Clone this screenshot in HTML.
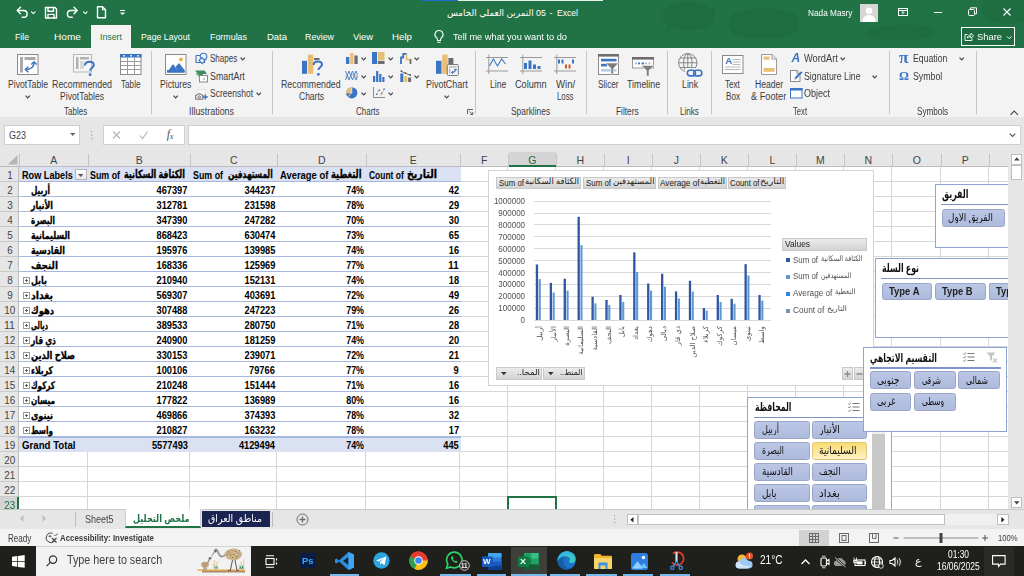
<!DOCTYPE html>
<html lang="en">
<head>
<meta charset="utf-8">
<title>05 التمرين العملي الخامس - Excel</title>
<style>
*{box-sizing:border-box;margin:0;padding:0}
html,body{width:1024px;height:576px;overflow:hidden;background:#fff}
body{position:relative;font-family:"Liberation Sans","DejaVu Sans",sans-serif;font-size:11px;color:#262626}
.abs{position:absolute}
.ar{font-family:"DejaVu Sans","Liberation Sans",sans-serif}
#title{left:0;top:0;width:1024px;height:48px;background:#217346;color:#fff;overflow:hidden}
#ribbon{left:0;top:48px;width:1024px;height:69px;background:#f3f3f3;color:#262626}
#fbar{left:0;top:117px;width:1024px;height:35px;background:#e6e6e6}
#colhdr{left:0;top:152px;width:1008px;height:15px;background:#e6e6e6;color:#444}
#grid{left:0;top:167px;width:1008px;height:342px;background:#fff;overflow:hidden}
#vscroll{left:1008px;top:152px;width:16px;height:357px;background:#e6e6e6}
#tabs{left:0;top:509px;width:1024px;height:20px;background:#e6e6e6}
#status{left:0;top:529px;width:1024px;height:17px;background:#f3f3f3;color:#333}
#task{left:0;top:546px;width:1024px;height:30px;background:#1f201c;color:#fff}
.t{position:absolute;white-space:nowrap;line-height:1}
.c{text-align:center}
svg{position:absolute;overflow:visible}
</style>
</head>
<body>
<!-- p_title -->
<div id="title" class="abs">
<svg width="1024" height="48" style="left:0;top:0"><g fill="#1d6a3f" opacity=".6"><path d="M668 6c10-5 34-5 44 2 6 5 4 15-4 19-9 4-26 4-34 1l-9 5 2-8c-6-5-6-14 1-19z"/><path d="M733 14c10-7 50-8 62 0 7 6 5 17-4 21-12 5-44 5-56 0-8-5-9-15-2-21z"/><path d="M868 30c8-6 50-8 64-2 5 3 3 8-3 10-14 3-48 3-58 0-5-2-6-5-3-8z"/><path d="M985 0h39v22c-12 3-30 2-38-4-6-5-6-13-1-18z"/><path d="M455 40c10-6 40-6 50 0v8h-50z" opacity=".5"/></g></svg>
<div class="abs" style="left:422px;top:0;width:36px;height:1px;background:#1e6fd0"></div>
<div class="abs" style="left:458px;top:0;width:145px;height:1px;background:#e8f0ea"></div>
<svg width="140" height="26" style="left:0;top:0" fill="none" stroke="#fff" stroke-width="1.4" stroke-linecap="round" stroke-linejoin="round"><path d="M17.5 10.5h6.2a3.4 3.4 0 0 1 0 6.8h-1.5"/><path d="M20.5 7.3l-3.2 3.2 3.2 3.2"/><path d="M31.5 11.8l1.8 1.8 1.8-1.8" stroke-width="1.1"/><path d="M45.5 7.5h9.5l1.5 1.5v9h-11z"/><path d="M48 7.8v3.4h5.5V7.8" /><path d="M48 18v-3.6h6V18" /><path d="M77 10.5h-6.2a3.4 3.4 0 0 0 0 6.8h1.5"/><path d="M74 7.3l3.2 3.2-3.2 3.2"/><path d="M83.5 11.8l1.8 1.8 1.8-1.8" stroke-width="1.1"/><path d="M97.5 6.8h5l3 3v8h-8z"/><path d="M102.5 6.8v3h3" stroke-width="1.1"/><path d="M120.5 10.5h4" stroke-width="1.1"/><path d="M120.7 13l1.8 1.8 1.8-1.8z" fill="#fff" stroke-width=".6"/></svg>
<span class="t" style="left:447.00px;top:7.60px;line-height:10.81px;font-family:'Liberation Sans','DejaVu Sans',sans-serif;font-size:9.4px;font-weight:400;transform:scaleX(0.9469);transform-origin:left center;"><span dir="rtl" style="unicode-bidi:isolate">05 التمرين العملي الخامس</span></span>
<span class="t" style="left:549.50px;top:7.60px;line-height:10.81px;font-family:'Liberation Sans','DejaVu Sans',sans-serif;font-size:9.4px;font-weight:400;">-</span>
<span class="t" style="left:557.00px;top:7.60px;line-height:10.81px;font-family:'Liberation Sans','DejaVu Sans',sans-serif;font-size:9.4px;font-weight:400;transform:scaleX(0.9155);transform-origin:left center;">Excel</span>
<span class="t" style="left:807.60px;top:7.60px;line-height:10.81px;font-family:'Liberation Sans','DejaVu Sans',sans-serif;font-size:9.4px;font-weight:400;transform:scaleX(0.8804);transform-origin:left center;">Nada Masry</span>
<div class="abs" style="left:860px;top:4px;width:18px;height:18px;background:#d6d6d6"></div>
<svg width="18" height="18" style="left:860px;top:4px" fill="#fff"><circle cx="9" cy="6.8" r="3.3"/><path d="M2.5 18c0-5 3-7 6.500-7s6.500 2 6.500 7z"/></svg>
<svg width="130" height="26" style="left:894px;top:0" fill="none" stroke="#fff" stroke-width="1"><rect x="4.500" y="8.500" width="9" height="7"/><path d="M4.500 10.500h9"/><path d="M9 14.200v-2.400M7.600 12.900l1.400-1.400 1.400 1.400" stroke-width=".9"/><path d="M40 12.500h8"/><rect x="74.500" y="9.500" width="6" height="6" rx="1"/><path d="M76.500 9.300v-1.500h6v6h-1.800" /><path d="M109.500 8.500l7 7M116.500 8.500l-7 7" stroke-width="1.2"/></svg>
<div class="abs" style="left:91px;top:25px;width:40px;height:23px;background:#f3f3f3"></div>
<span class="t" style="left:15.00px;top:31.80px;line-height:10.81px;font-family:'Liberation Sans','DejaVu Sans',sans-serif;font-size:9.4px;font-weight:400;transform:scaleX(0.9266);transform-origin:left center;">File</span>
<span class="t" style="left:54.00px;top:31.80px;line-height:10.81px;font-family:'Liberation Sans','DejaVu Sans',sans-serif;font-size:9.4px;font-weight:400;transform:scaleX(1.0793);transform-origin:left center;">Home</span>
<span class="t" style="left:141.00px;top:31.80px;line-height:10.81px;font-family:'Liberation Sans','DejaVu Sans',sans-serif;font-size:9.4px;font-weight:400;transform:scaleX(0.9306);transform-origin:left center;">Page Layout</span>
<span class="t" style="left:210.00px;top:31.80px;line-height:10.81px;font-family:'Liberation Sans','DejaVu Sans',sans-serif;font-size:9.4px;font-weight:400;transform:scaleX(0.9468);transform-origin:left center;">Formulas</span>
<span class="t" style="left:267.00px;top:31.80px;line-height:10.81px;font-family:'Liberation Sans','DejaVu Sans',sans-serif;font-size:9.4px;font-weight:400;transform:scaleX(1.0095);transform-origin:left center;">Data</span>
<span class="t" style="left:305.00px;top:31.80px;line-height:10.81px;font-family:'Liberation Sans','DejaVu Sans',sans-serif;font-size:9.4px;font-weight:400;transform:scaleX(0.9431);transform-origin:left center;">Review</span>
<span class="t" style="left:353.00px;top:31.80px;line-height:10.81px;font-family:'Liberation Sans','DejaVu Sans',sans-serif;font-size:9.4px;font-weight:400;transform:scaleX(0.9922);transform-origin:left center;">View</span>
<span class="t" style="left:392.00px;top:31.80px;line-height:10.81px;font-family:'Liberation Sans','DejaVu Sans',sans-serif;font-size:9.4px;font-weight:400;transform:scaleX(1.0373);transform-origin:left center;">Help</span>
<span class="t" style="left:100.00px;top:31.80px;line-height:10.81px;font-family:'Liberation Sans','DejaVu Sans',sans-serif;font-size:9.4px;font-weight:400;color:#217346;transform:scaleX(0.9380);transform-origin:left center;">Insert</span>
<svg width="14" height="18" style="left:432px;top:28px" fill="none" stroke="#fff" stroke-width="1.1" stroke-linecap="round"><path d="M7 2.500a4 4 0 0 0-2.300 7.300c.5.500.8 1.100.8 2v.7h3v-.7c0-.9.300-1.500.8-2A4 4 0 0 0 7 2.500z"/><path d="M5.800 14.300h2.400"/></svg>
<span class="t" style="left:453.00px;top:31.80px;line-height:10.81px;font-family:'Liberation Sans','DejaVu Sans',sans-serif;font-size:9.4px;font-weight:400;transform:scaleX(0.9854);transform-origin:left center;">Tell me what you want to do</span>
<div class="abs" style="left:961px;top:27px;width:54px;height:19px;border:1px solid #fff;background:#1e6b40"></div>
<svg width="11" height="11" style="left:964px;top:31px" fill="none" stroke="#fff" stroke-width=".9" stroke-linejoin="round"><path d="M3.500 3.500h-2.500v6h7v-2"/><path d="M3.300 7c.3-2 1.600-3 3.700-3.100V2.300l2.500 2.500L7 7.300V5.700c-1.500 0-2.700.3-3.700 1.300z"/></svg>
<span class="t" style="left:976.70px;top:30.98px;line-height:11.04px;font-family:'Liberation Sans','DejaVu Sans',sans-serif;font-size:9.6px;font-weight:400;transform:scaleX(0.9762);transform-origin:left center;">Share</span>
<svg width="8" height="6" style="left:1006px;top:34.500px" fill="none" stroke="#fff" stroke-width="1"><path d="M1 1.500l2.200 2.200 2.200-2.200"/></svg>
</div>
<!-- p_ribbon -->
<div id="ribbon" class="abs"></div>
<div class="abs" style="left:0;top:116.500px;width:1024px;height:1px;background:#e9e9e9"></div>
<svg width="22" height="21" style="left:17px;top:54px"><rect x=".5" y=".5" width="20.500" height="20" fill="#fdfdfd" stroke="#8a8a8a"/><rect x="3" y="3" width="3" height="15.500" fill="#a9a9a9"/><rect x="7.500" y="3" width="11" height="3" fill="#a9a9a9"/><path d="M9 15.500c4.500 0 8-2.500 8-6.500" fill="none" stroke="#3a74c4" stroke-width="1.500"/><path d="M14.300 10.500L17 7.800l2.700 2.700" fill="none" stroke="#3a74c4" stroke-width="1.500"/><path d="M11.300 12.800L8.500 15.500l2.800 2.700" fill="none" stroke="#3a74c4" stroke-width="1.500"/></svg>
<span class="t" style="left:7.80px;top:78.85px;line-height:11.50px;font-family:'Liberation Sans','DejaVu Sans',sans-serif;font-size:10px;font-weight:400;color:#3b3b3b;transform:scaleX(0.8669);transform-origin:left center;">PivotTable</span>
<svg width="6" height="4" style="left:24.6px;top:94.9px" fill="none" stroke="#444" stroke-width="1.200"><path d="M.5 .7l2.200 2.200 2.200-2.200"/></svg>
<svg width="24" height="24" style="left:73px;top:54px"><rect x=".5" y=".5" width="18" height="17.500" fill="#f6f6f6" stroke="#b5b5b5"/><rect x="3" y="3" width="2.500" height="12" fill="#b0b0b0"/><rect x="7" y="3" width="9" height="2.500" fill="#b0b0b0"/><rect x="7" y="7" width="4" height="8" fill="#d8d8d8"/><path d="M12 11.500c0-2.800 2-3.800 4.500-3.800s4.300 1.200 4.300 3.300c0 2.700-3.700 2.800-3.700 5.800" fill="none" stroke="#3a74c4" stroke-width="2"/><circle cx="17.100" cy="20.700" r="1.400" fill="#3a74c4"/></svg>
<span class="t" style="left:52.00px;top:78.85px;line-height:11.50px;font-family:'Liberation Sans','DejaVu Sans',sans-serif;font-size:10px;font-weight:400;color:#3b3b3b;transform:scaleX(0.8848);transform-origin:left center;">Recommended</span>
<span class="t" style="left:60.00px;top:90.95px;line-height:11.50px;font-family:'Liberation Sans','DejaVu Sans',sans-serif;font-size:10px;font-weight:400;color:#3b3b3b;transform:scaleX(0.8604);transform-origin:left center;">PivotTables</span>
<svg width="22" height="21" style="left:120px;top:54px"><rect x=".5" y=".5" width="20.500" height="20" fill="#fff" stroke="#8a8a8a"/><rect x="0" y="0" width="21.500" height="3.500" fill="#3a74c4"/><path d="M.5 7.500h20.500M.5 11.500h20.500M.5 15.500h20.500M7.500 3.500v17M14.500 3.500v17" stroke="#9a9a9a" fill="none"/><rect x="3" y="1.200" width="2" height="1.200" fill="#fff"/><rect x="10" y="1.200" width="2" height="1.200" fill="#fff"/><rect x="17" y="1.200" width="2" height="1.200" fill="#fff"/></svg>
<span class="t" style="left:120.60px;top:78.85px;line-height:11.50px;font-family:'Liberation Sans','DejaVu Sans',sans-serif;font-size:10px;font-weight:400;color:#3b3b3b;transform:scaleX(0.8157);transform-origin:left center;">Table</span>
<span class="t" style="left:63.80px;top:105.85px;line-height:11.50px;font-family:'Liberation Sans','DejaVu Sans',sans-serif;font-size:10px;font-weight:400;color:#3b3b3b;transform:scaleX(0.8026);transform-origin:left center;">Tables</span>
<div class="abs" style="left:151px;top:51px;width:1px;height:63px;background:#c6c6c6"></div>
<svg width="22" height="21" style="left:164.500px;top:54px"><rect x=".5" y=".5" width="20.500" height="20" fill="#fdfdfd" stroke="#8a8a8a"/><circle cx="16" cy="5.500" r="1.900" fill="#e8b04a"/><path d="M2 18.500l6-8.500 6 8.500z" fill="#3a74c4"/><path d="M10.500 13l3.500-4 5.500 7v2.500h-6z" fill="#3a74c4"/><rect x="2" y="16" width="17.500" height="2.500" fill="#3a74c4"/></svg>
<span class="t" style="left:159.70px;top:78.85px;line-height:11.50px;font-family:'Liberation Sans','DejaVu Sans',sans-serif;font-size:10px;font-weight:400;color:#3b3b3b;transform:scaleX(0.8664);transform-origin:left center;">Pictures</span>
<svg width="6" height="4" style="left:172.6px;top:94.9px" fill="none" stroke="#444" stroke-width="1.200"><path d="M.5 .7l2.200 2.200 2.200-2.200"/></svg>
<svg width="14" height="13" style="left:195px;top:52px" fill="none" stroke="#3a74c4" stroke-width="1.100"><path d="M1 3.500h5M9.500 8v2.500H1V3.500"/><circle cx="8.500" cy="4.500" r="3.300" fill="#f3f3f3"/><path d="M6.800 5.500l3.200 3.300-2.800 2.800L4 8.300z" fill="#f3f3f3"/></svg>
<span class="t" style="left:210.00px;top:53.15px;line-height:11.50px;font-family:'Liberation Sans','DejaVu Sans',sans-serif;font-size:10px;font-weight:400;color:#3b3b3b;transform:scaleX(0.8018);transform-origin:left center;">Shapes</span>
<svg width="6" height="4" style="left:240.3px;top:57.4px" fill="none" stroke="#444" stroke-width="1.200"><path d="M.5 .7l2.200 2.200 2.200-2.200"/></svg>
<svg width="14" height="13" style="left:195px;top:69.500px"><path d="M0 .5h9.500l2.500 3.500H8l-1.500 2.500H4.500L3 4z" fill="#3f8f5e"/><path d="M1 3l3.500 4" stroke="#3f8f5e" fill="none"/><rect x="4.500" y="5.500" width="8" height="6.500" fill="#fdfdfd" stroke="#8a8a8a"/><rect x="8" y="8" width="2" height="2" fill="#c9c9c9"/></svg>
<span class="t" style="left:210.00px;top:70.55px;line-height:11.50px;font-family:'Liberation Sans','DejaVu Sans',sans-serif;font-size:10px;font-weight:400;color:#3b3b3b;transform:scaleX(0.8821);transform-origin:left center;">SmartArt</span>
<svg width="14" height="11" style="left:195px;top:88.500px"><rect x="2.500" y=".5" width="8" height="6" fill="#fbfbfb" stroke="#e2e2e2"/><path d="M.7 6h1.600l.8-1.200h2.600l.8 1.200h1.300v4.200H.7z" fill="#f3f3f3" stroke="#5b5b5b" stroke-width=".9"/><circle cx="4.300" cy="8" r="1.200" fill="none" stroke="#5b5b5b" stroke-width=".8"/><path d="M10.300 5.500v5M7.800 8h5" stroke="#3a74c4" stroke-width="1.400"/></svg>
<span class="t" style="left:210.00px;top:87.75px;line-height:11.50px;font-family:'Liberation Sans','DejaVu Sans',sans-serif;font-size:10px;font-weight:400;color:#3b3b3b;transform:scaleX(0.8499);transform-origin:left center;">Screenshot</span>
<svg width="6" height="4" style="left:255.6px;top:92.0px" fill="none" stroke="#444" stroke-width="1.200"><path d="M.5 .7l2.200 2.200 2.200-2.200"/></svg>
<span class="t" style="left:189.00px;top:105.85px;line-height:11.50px;font-family:'Liberation Sans','DejaVu Sans',sans-serif;font-size:10px;font-weight:400;color:#3b3b3b;transform:scaleX(0.8897);transform-origin:left center;">Illustrations</span>
<div class="abs" style="left:272px;top:51px;width:1px;height:63px;background:#c6c6c6"></div>
<!-- p_ribbon2 -->
<svg width="24" height="24" style="left:301px;top:54px"><rect x="1" y="6.800" width="5" height="13" fill="#3a74c4"/><rect x="6.800" y=".6" width="5.500" height="19.200" fill="#e9bf76"/><rect x="13" y="4" width="5.500" height="2" fill="#6d6d6d"/><path d="M12.600 11c0-2.500 1.800-3.500 4.200-3.500s4.200 1.100 4.200 3.100c0 2.600-3.600 2.700-3.600 5.400" fill="none" stroke="#3a74c4" stroke-width="2"/><circle cx="17.300" cy="20.300" r="1.400" fill="#3a74c4"/><path d="M8 3h1.500M8 6h1.500M8 9h1.500M8 12h1.500" stroke="#d2a14d" stroke-width=".8"/></svg>
<span class="t" style="left:281.00px;top:78.85px;line-height:11.50px;font-family:'Liberation Sans','DejaVu Sans',sans-serif;font-size:10px;font-weight:400;color:#3b3b3b;transform:scaleX(0.8789);transform-origin:left center;">Recommended</span>
<span class="t" style="left:298.80px;top:90.95px;line-height:11.50px;font-family:'Liberation Sans','DejaVu Sans',sans-serif;font-size:10px;font-weight:400;color:#3b3b3b;transform:scaleX(0.8488);transform-origin:left center;">Charts</span>
<svg width="12" height="11" style="left:345.600px;top:52.700px"><rect x="0" y="4" width="3.300" height="7" fill="#3a74c4"/><rect x="4.200" y="0" width="3.300" height="11" fill="#e9bf76"/><rect x="8.400" y="2.500" width="3.300" height="8.500" fill="#6d6d6d"/></svg>
<svg width="6" height="4" style="left:360.6px;top:57.4px" fill="none" stroke="#444" stroke-width="1.200"><path d="M.5 .7l2.200 2.200 2.200-2.200"/></svg>
<svg width="13" height="11" style="left:345px;top:70px" fill="none" stroke-width=".85"><path d="M.5 10l3.500-9 3.500 9 3.500-9 1.500 4" stroke="#3a74c4"/><path d="M.5 1l3.500 9 3.500-9 3.500 9 1.500-4" stroke="#3a74c4"/><path d="M.5 6l4 1.500 3.500-3 4.500 2" stroke="#9a9a9a" stroke-width=".7"/></svg>
<svg width="6" height="4" style="left:360.6px;top:74.8px" fill="none" stroke="#444" stroke-width="1.200"><path d="M.5 .7l2.200 2.200 2.200-2.200"/></svg>
<svg width="12" height="12" style="left:345.600px;top:87px"><circle cx="5.800" cy="5.800" r="5.600" fill="#3a74c4"/><path d="M5.800 5.800V.2A5.600 5.600 0 0 0 .2 5.800z" fill="#e9bf76"/><path d="M5.800 5.800H.2a5.600 5.600 0 0 0 1.700 4z" fill="#6d6d6d"/><path d="M5.800 .2v5.600H.2M5.800 5.800L1.900 9.800" stroke="#f3f3f3" stroke-width=".8" fill="none"/></svg>
<svg width="6" height="4" style="left:360.6px;top:92.0px" fill="none" stroke="#444" stroke-width="1.200"><path d="M.5 .7l2.200 2.200 2.200-2.200"/></svg>
<svg width="13" height="12" style="left:372px;top:52.200px"><rect x="0" y="0" width="5" height="12" fill="#3a74c4"/><rect x="5.800" y="0" width="6.700" height="8" fill="#e9bf76"/><rect x="5.800" y="8.800" width="6.700" height="3.200" fill="#6d6d6d"/></svg>
<svg width="6" height="4" style="left:387.6px;top:57.4px" fill="none" stroke="#444" stroke-width="1.200"><path d="M.5 .7l2.200 2.200 2.200-2.200"/></svg>
<svg width="12" height="11" style="left:372.500px;top:70.500px" fill="#3a74c4"><rect x="0" y="5" width="2.200" height="6"/><rect x="3.100" y="0" width="2.200" height="11"/><rect x="6.200" y="3" width="2.200" height="8"/><rect x="9.300" y="6" width="2.200" height="5"/></svg>
<svg width="6" height="4" style="left:387.6px;top:74.8px" fill="none" stroke="#444" stroke-width="1.200"><path d="M.5 .7l2.200 2.200 2.200-2.200"/></svg>
<svg width="13" height="12" style="left:372.500px;top:87px"><path d="M.5 0v10.500h11.500" stroke="#8a8a8a" fill="none"/><g fill="#3a74c4"><rect x="3" y="6.500" width="1.500" height="1.500"/><rect x="5.500" y="2.500" width="1.500" height="1.500"/><rect x="8" y="5.500" width="1.500" height="1.500"/><rect x="10.300" y="1.500" width="1.500" height="1.500"/></g><g fill="#e9bf76"><rect x="4" y="3.800" width="1.500" height="1.500"/><rect x="7" y="7" width="1.500" height="1.500"/><rect x="9.500" y="3.500" width="1.500" height="1.500"/></g></svg>
<svg width="6" height="4" style="left:387.6px;top:92.0px" fill="none" stroke="#444" stroke-width="1.200"><path d="M.5 .7l2.200 2.200 2.200-2.200"/></svg>
<svg width="12" height="11" style="left:399.500px;top:52.700px" fill="none" stroke-width="1.800"><path d="M1 11V4.500h3" stroke="#3a74c4"/><path d="M3.200 4.500V1h3.500" stroke="#3a74c4"/><path d="M6.500 1v5.500h3" stroke="#e9bf76"/><path d="M10.500 6v5" stroke="#6d6d6d"/></svg>
<svg width="6" height="4" style="left:414.3px;top:57.4px" fill="none" stroke="#444" stroke-width="1.200"><path d="M.5 .7l2.200 2.200 2.200-2.200"/></svg>
<svg width="12" height="12" style="left:399.500px;top:69.500px"><rect x=".3" y="3.500" width="3" height="8.500" fill="#3a74c4"/><rect x="4.200" y="6" width="3" height="6" fill="#e9bf76"/><rect x="8.100" y="7.500" width="3" height="4.500" fill="#6d6d6d"/><path d="M1 1l4 2.200 5.500 2" stroke="#555" stroke-width=".9" fill="none"/><g fill="#555"><rect x=".5" y=".3" width="1.500" height="1.500"/><rect x="4.800" y="2.300" width="1.500" height="1.500"/><rect x="9.500" y="4.300" width="1.500" height="1.500"/></g></svg>
<svg width="6" height="4" style="left:414.3px;top:74.8px" fill="none" stroke="#444" stroke-width="1.200"><path d="M.5 .7l2.200 2.200 2.200-2.200"/></svg>
<svg width="24" height="24" style="left:435px;top:54px"><rect x="1" y="6.800" width="5.500" height="13" fill="#3a74c4"/><rect x="7.200" y=".6" width="5.500" height="19.200" fill="#e9bf76"/><rect x="13.400" y="4" width="5" height="6" fill="#6d6d6d"/><rect x="12.300" y="10.500" width="11" height="11" rx="1" fill="#f3f3f3" stroke="#7a7a7a"/><rect x="14" y="12.200" width="7.500" height="1.300" fill="#b5b5b5"/><rect x="14" y="14.500" width="1.300" height="5" fill="#b5b5b5"/><path d="M16.500 18.500c2.500 0 4-1.300 4-3.300" fill="none" stroke="#3a74c4" stroke-width="1.100"/><path d="M19 16.300l1.500-1.500 1.500 1.500" fill="none" stroke="#3a74c4" stroke-width="1"/><path d="M18 17l-1.500 1.500L18 20" fill="none" stroke="#3a74c4" stroke-width="1"/></svg>
<span class="t" style="left:426.00px;top:78.85px;line-height:11.50px;font-family:'Liberation Sans','DejaVu Sans',sans-serif;font-size:10px;font-weight:400;color:#3b3b3b;transform:scaleX(0.8932);transform-origin:left center;">PivotChart</span>
<svg width="6" height="4" style="left:443.6px;top:94.9px" fill="none" stroke="#444" stroke-width="1.200"><path d="M.5 .7l2.200 2.200 2.200-2.200"/></svg>
<span class="t" style="left:355.80px;top:105.85px;line-height:11.50px;font-family:'Liberation Sans','DejaVu Sans',sans-serif;font-size:10px;font-weight:400;color:#3b3b3b;transform:scaleX(0.8013);transform-origin:left center;">Charts</span>
<svg width="7" height="6" style="left:467px;top:108.500px" fill="none" stroke="#555" stroke-width=".9"><path d="M.5 5V.5H6"/><path d="M2.500 2.500l3.300 3M5.800 3v2.500H3.300"/></svg>
<div class="abs" style="left:475px;top:51px;width:1px;height:63px;background:#c6c6c6"></div>
<svg width="23" height="20" style="left:486.400px;top:54px"><path d="M0 3.500h22M0 17h22M2.8 .5v19.500" stroke="#9a9a9a" fill="none"/><path d="M3.500 12l3.800-7 4.200 7 4.200-7 3.800 5" stroke="#3a74c4" stroke-width="1.100" fill="none"/></svg>
<span class="t" style="left:489.80px;top:78.85px;line-height:11.50px;font-family:'Liberation Sans','DejaVu Sans',sans-serif;font-size:10px;font-weight:400;color:#3b3b3b;transform:scaleX(0.8569);transform-origin:left center;">Line</span>
<svg width="23" height="20" style="left:520.300px;top:54px"><path d="M0 3.500h22M0 17h22M2.8 .5v19.500" stroke="#9a9a9a" fill="none"/><g fill="#3a74c4"><rect x="4" y="9" width="3" height="6"/><rect x="8.500" y="6.500" width="3" height="8.500"/><rect x="13" y="10.500" width="3" height="4.500"/><rect x="17.500" y="12" width="3" height="3"/></g></svg>
<span class="t" style="left:515.30px;top:78.85px;line-height:11.50px;font-family:'Liberation Sans','DejaVu Sans',sans-serif;font-size:10px;font-weight:400;color:#3b3b3b;transform:scaleX(0.9168);transform-origin:left center;">Column</span>
<svg width="23" height="20" style="left:554px;top:54px"><path d="M0 3.500h22M0 17h22M2.8 .5v19.500" stroke="#9a9a9a" fill="none"/><g fill="#3a74c4"><rect x="4" y="5.500" width="2" height="4"/><rect x="7.500" y="5.500" width="2" height="4"/><rect x="18" y="5.500" width="2" height="4"/></g><g fill="#d0582a"><rect x="11" y="10.500" width="2" height="4"/><rect x="14.500" y="10.500" width="2" height="4"/></g></svg>
<span class="t" style="left:555.60px;top:78.85px;line-height:11.50px;font-family:'Liberation Sans','DejaVu Sans',sans-serif;font-size:10px;font-weight:400;color:#3b3b3b;transform:scaleX(0.9550);transform-origin:left center;">Win/</span>
<span class="t" style="left:556.70px;top:90.95px;line-height:11.50px;font-family:'Liberation Sans','DejaVu Sans',sans-serif;font-size:10px;font-weight:400;color:#3b3b3b;transform:scaleX(0.7811);transform-origin:left center;">Loss</span>
<span class="t" style="left:511.40px;top:105.85px;line-height:11.50px;font-family:'Liberation Sans','DejaVu Sans',sans-serif;font-size:10px;font-weight:400;color:#3b3b3b;transform:scaleX(0.8372);transform-origin:left center;">Sparklines</span>
<div class="abs" style="left:586px;top:51px;width:1px;height:63px;background:#c6c6c6"></div>
<!-- p_ribbon3 -->
<svg width="22" height="22" style="left:598px;top:54px"><rect x=".5" y=".5" width="20" height="20" fill="#fdfdfd" stroke="#8a8a8a"/><rect x="0" y="0" width="21" height="2.600" fill="#6d6d6d"/><rect x="3" y="4.800" width="15.500" height="2.600" fill="#3a74c4"/><rect x="3" y="9.800" width="6" height="2.600" fill="#3a74c4"/><rect x="3" y="15" width="15.500" height="2.600" fill="#b8cbe8"/><path d="M7.500 9h13l-5 5.500v5.500h-2.500v-5.500z" fill="#7d7d7d" stroke="#fdfdfd" stroke-width=".6"/></svg>
<span class="t" style="left:598.40px;top:78.85px;line-height:11.50px;font-family:'Liberation Sans','DejaVu Sans',sans-serif;font-size:10px;font-weight:400;color:#3b3b3b;transform:scaleX(0.8235);transform-origin:left center;">Slicer</span>
<svg width="23" height="20" style="left:632px;top:57px"><rect x=".5" y=".5" width="21" height="10.500" fill="#fdfdfd" stroke="#9a9a9a"/><rect x="0" y="0" width="22" height="2.600" fill="#6d6d6d"/><rect x="3" y="5.500" width="2" height="1.800" fill="#b5b5b5"/><rect x="6" y="5.500" width="2" height="1.800" fill="#3a74c4"/><rect x="9.500" y="5.500" width="2.500" height="1.800" fill="#3a74c4"/><rect x="13" y="5.500" width="2" height="1.800" fill="#b5b5b5"/><rect x="16.500" y="5.500" width="2" height="1.800" fill="#b5b5b5"/><path d="M9.500 8.500h12.500l-5 5v5.500h-2.500v-5.500z" fill="#7d7d7d" stroke="#f3f3f3" stroke-width=".6"/></svg>
<span class="t" style="left:626.90px;top:78.85px;line-height:11.50px;font-family:'Liberation Sans','DejaVu Sans',sans-serif;font-size:10px;font-weight:400;color:#3b3b3b;transform:scaleX(0.8845);transform-origin:left center;">Timeline</span>
<span class="t" style="left:615.60px;top:105.85px;line-height:11.50px;font-family:'Liberation Sans','DejaVu Sans',sans-serif;font-size:10px;font-weight:400;color:#3b3b3b;transform:scaleX(0.8335);transform-origin:left center;">Filters</span>
<div class="abs" style="left:667px;top:51px;width:1px;height:63px;background:#c6c6c6"></div>
<svg width="26" height="24" style="left:678px;top:53px" fill="none"><g stroke="#7a7a7a" stroke-width=".9"><circle cx="9.800" cy="9.800" r="9.200"/><ellipse cx="9.800" cy="9.800" rx="4.200" ry="9.200"/><path d="M9.800 .6v18.400M.6 9.800h18.400M2 5h15.600M2 14.600h15.600"/></g><rect x="7" y="15" width="19" height="10" fill="#f3f3f3" stroke="none"/><g stroke="#3a74c4" stroke-width="1.600"><rect x="9.300" y="17.300" width="8.200" height="5.600" rx="2.800"/><rect x="15.700" y="17.300" width="8.200" height="5.600" rx="2.800"/></g></svg>
<span class="t" style="left:681.90px;top:78.85px;line-height:11.50px;font-family:'Liberation Sans','DejaVu Sans',sans-serif;font-size:10px;font-weight:400;color:#3b3b3b;transform:scaleX(0.8769);transform-origin:left center;">Link</span>
<span class="t" style="left:679.50px;top:105.85px;line-height:11.50px;font-family:'Liberation Sans','DejaVu Sans',sans-serif;font-size:10px;font-weight:400;color:#3b3b3b;transform:scaleX(0.8048);transform-origin:left center;">Links</span>
<div class="abs" style="left:711px;top:51px;width:1px;height:63px;background:#c6c6c6"></div>
<svg width="22" height="20" style="left:722px;top:54.500px"><rect x=".5" y=".5" width="20.500" height="18" fill="#fdfdfd" stroke="#8a8a8a"/><path d="M10.500 4.500h8M10.500 7h8M10.500 9.500h8M3 12h15.500M3 14.500h15.500" stroke="#b0b0b0" stroke-width=".9"/></svg>
<span class="t" style="left:725.30px;top:56.34px;line-height:10.92px;font-family:'Liberation Sans','DejaVu Sans',sans-serif;font-size:9.5px;font-weight:700;color:#3a74c4;">A</span>
<span class="t" style="left:725.20px;top:78.85px;line-height:11.50px;font-family:'Liberation Sans','DejaVu Sans',sans-serif;font-size:10px;font-weight:400;color:#3b3b3b;transform:scaleX(0.8068);transform-origin:left center;">Text</span>
<span class="t" style="left:725.60px;top:90.95px;line-height:11.50px;font-family:'Liberation Sans','DejaVu Sans',sans-serif;font-size:10px;font-weight:400;color:#3b3b3b;transform:scaleX(0.8181);transform-origin:left center;">Box</span>
<svg width="17" height="21" style="left:761px;top:54px"><path d="M.5 .5h10.500l4.500 4.500v15.500H.5z" fill="#fdfdfd" stroke="#9a9a9a"/><path d="M11 .5v4.500h4.500" fill="none" stroke="#9a9a9a"/><rect x="2.500" y="2.500" width="6" height="3.200" fill="#e9bf76"/><rect x="2.500" y="14" width="11" height="3.800" fill="#e9bf76"/></svg>
<span class="t" style="left:754.50px;top:78.85px;line-height:11.50px;font-family:'Liberation Sans','DejaVu Sans',sans-serif;font-size:10px;font-weight:400;color:#3b3b3b;transform:scaleX(0.8594);transform-origin:left center;">Header</span>
<span class="t" style="left:750.60px;top:90.95px;line-height:11.50px;font-family:'Liberation Sans','DejaVu Sans',sans-serif;font-size:10px;font-weight:400;color:#3b3b3b;transform:scaleX(0.9176);transform-origin:left center;">&amp; Footer</span>
<span class="t" style="left:791.50px;top:52.10px;line-height:13.80px;font-family:'Liberation Sans','DejaVu Sans',sans-serif;font-size:12px;font-weight:700;color:#3a74c4;font-style:italic;">A</span>
<span class="t" style="left:804.20px;top:53.15px;line-height:11.50px;font-family:'Liberation Sans','DejaVu Sans',sans-serif;font-size:10px;font-weight:400;color:#3b3b3b;transform:scaleX(0.9288);transform-origin:left center;">WordArt</span>
<svg width="6" height="4" style="left:840.3px;top:57.4px" fill="none" stroke="#444" stroke-width="1.200"><path d="M.5 .7l2.200 2.200 2.200-2.200"/></svg>
<svg width="13" height="12" style="left:790px;top:70px"><path d="M.5 .5h6.500l3 3v8H.5z" fill="#fdfdfd" stroke="#7a7a7a" stroke-width=".9"/><path d="M7 .5v3h3" fill="none" stroke="#7a7a7a" stroke-width=".9"/><path d="M4 10l1-3 6-6 1.700 1.700-6 6z" fill="#3a74c4" stroke="#f3f3f3" stroke-width=".5"/></svg>
<span class="t" style="left:804.20px;top:70.55px;line-height:11.50px;font-family:'Liberation Sans','DejaVu Sans',sans-serif;font-size:10px;font-weight:400;color:#3b3b3b;transform:scaleX(0.8775);transform-origin:left center;">Signature Line</span>
<svg width="6" height="4" style="left:871.8px;top:74.8px" fill="none" stroke="#444" stroke-width="1.200"><path d="M.5 .7l2.200 2.200 2.200-2.200"/></svg>
<svg width="13" height="11" style="left:790px;top:87.800px"><rect x=".5" y=".5" width="11.500" height="9.500" fill="#fdfdfd" stroke="#3a74c4"/><rect x="0" y="0" width="12.500" height="2.500" fill="#3a74c4"/></svg>
<span class="t" style="left:804.20px;top:87.75px;line-height:11.50px;font-family:'Liberation Sans','DejaVu Sans',sans-serif;font-size:10px;font-weight:400;color:#3b3b3b;transform:scaleX(0.9029);transform-origin:left center;">Object</span>
<span class="t" style="left:792.80px;top:105.85px;line-height:11.50px;font-family:'Liberation Sans','DejaVu Sans',sans-serif;font-size:10px;font-weight:400;color:#3b3b3b;transform:scaleX(0.7687);transform-origin:left center;">Text</span>
<div class="abs" style="left:889px;top:51px;width:1px;height:63px;background:#c6c6c6"></div>
<span class="t" style="left:899.00px;top:48.80px;line-height:18.40px;font-family:'Liberation Serif','DejaVu Serif',serif;font-size:16px;font-weight:700;color:#3a74c4;transform:scaleX(1.0838);transform-origin:left center;">π</span>
<span class="t" style="left:912.80px;top:53.15px;line-height:11.50px;font-family:'Liberation Sans','DejaVu Sans',sans-serif;font-size:10px;font-weight:400;color:#3b3b3b;transform:scaleX(0.8687);transform-origin:left center;">Equation</span>
<svg width="6" height="4" style="left:958.6px;top:57.4px" fill="none" stroke="#444" stroke-width="1.200"><path d="M.5 .7l2.200 2.200 2.200-2.200"/></svg>
<span class="t" style="left:899.00px;top:68.61px;line-height:14.37px;font-family:'Liberation Serif','DejaVu Serif',serif;font-size:12.5px;font-weight:700;color:#3a74c4;transform:scaleX(0.9984);transform-origin:left center;">Ω</span>
<span class="t" style="left:912.80px;top:70.55px;line-height:11.50px;font-family:'Liberation Sans','DejaVu Sans',sans-serif;font-size:10px;font-weight:400;color:#3b3b3b;transform:scaleX(0.8783);transform-origin:left center;">Symbol</span>
<span class="t" style="left:916.80px;top:105.85px;line-height:11.50px;font-family:'Liberation Sans','DejaVu Sans',sans-serif;font-size:10px;font-weight:400;color:#3b3b3b;transform:scaleX(0.8134);transform-origin:left center;">Symbols</span>
<div class="abs" style="left:976px;top:51px;width:1px;height:63px;background:#c6c6c6"></div>
<svg width="9" height="6" style="left:1010px;top:109.500px" fill="none" stroke="#444" stroke-width="1.100"><path d="M.5 4.800l3.700-3.700 3.700 3.700"/></svg>
<!-- p_fbar -->
<div id="fbar" class="abs"></div>
<div class="abs" style="left:3.500px;top:125px;width:76.500px;height:19.500px;background:#fff;border:1px solid #cfcfcf;"></div>
<span class="t" style="left:9.00px;top:129.46px;line-height:12.07px;font-family:'Liberation Sans','DejaVu Sans',sans-serif;font-size:10.5px;font-weight:400;color:#444;transform:scaleX(0.8560);transform-origin:left center;">G23</span>
<svg width="6" height="4" style="left:69.500px;top:133px"><path d="M0 0h5.500L2.750 3z" fill="#666"/></svg>
<svg width="2" height="9" style="left:90.500px;top:131px" fill="#a0a0a0"><rect x="0" y="0" width="1.200" height="1.200"/><rect x="0" y="3.500" width="1.200" height="1.200"/><rect x="0" y="7" width="1.200" height="1.200"/></svg>
<div class="abs" style="left:103px;top:125px;width:82px;height:19.500px;background:#fff;border:1px solid #cfcfcf;"></div>
<svg width="70" height="12" style="left:110px;top:129px" fill="none" stroke="#b4b4b4" stroke-width="1.100"><path d="M3 2.500l7 7M10 2.500l-7 7"/><path d="M30 6.500l2.500 3 5-7"/></svg>
<span class="t" style="left:166.80px;top:128.10px;line-height:13.80px;font-family:'Liberation Serif','DejaVu Serif',serif;font-size:12px;font-weight:400;color:#555;font-style:italic;"><i>f</i><span style="font-size:8.500px;position:relative;top:1.200px;left:-.3px">x</span></span>
<div class="abs" style="left:187.500px;top:125px;width:833px;height:19.500px;background:#fff;border:1px solid #cfcfcf;"></div>
<svg width="8" height="5" style="left:1008.500px;top:133px" fill="none" stroke="#555" stroke-width="1.200"><path d="M.7 .7l2.800 2.800L6.300 .7"/></svg>
<!-- p_grid -->
<div id="colhdr" class="abs"></div>
<div class="abs" style="left:0;top:166px;width:1008px;height:1px;background:#bdbdbd"></div>
<svg width="10" height="10" style="left:8px;top:154.500px"><path d="M9.500 0v9.500H0z" fill="#b5b5b5"/></svg>
<div class="abs" style="left:19px;top:154px;width:1px;height:12px;background:#c4c4c4"></div>
<span class="t" style="left:50.29px;top:154.26px;line-height:12.07px;font-family:'Liberation Sans','DejaVu Sans',sans-serif;font-size:10.5px;font-weight:400;color:#444;">A</span>
<div class="abs" style="left:88px;top:154px;width:1px;height:12px;background:#c4c4c4"></div>
<span class="t" style="left:135.79px;top:154.26px;line-height:12.07px;font-family:'Liberation Sans','DejaVu Sans',sans-serif;font-size:10.5px;font-weight:400;color:#444;">B</span>
<div class="abs" style="left:190px;top:154px;width:1px;height:12px;background:#c4c4c4"></div>
<span class="t" style="left:230.00px;top:154.26px;line-height:12.07px;font-family:'Liberation Sans','DejaVu Sans',sans-serif;font-size:10.5px;font-weight:400;color:#444;">C</span>
<div class="abs" style="left:277px;top:154px;width:1px;height:12px;background:#c4c4c4"></div>
<span class="t" style="left:318.00px;top:154.26px;line-height:12.07px;font-family:'Liberation Sans','DejaVu Sans',sans-serif;font-size:10.5px;font-weight:400;color:#444;">D</span>
<div class="abs" style="left:366px;top:154px;width:1px;height:12px;background:#c4c4c4"></div>
<span class="t" style="left:409.79px;top:154.26px;line-height:12.07px;font-family:'Liberation Sans','DejaVu Sans',sans-serif;font-size:10.5px;font-weight:400;color:#444;">E</span>
<div class="abs" style="left:460px;top:154px;width:1px;height:12px;background:#c4c4c4"></div>
<span class="t" style="left:481.09px;top:154.26px;line-height:12.07px;font-family:'Liberation Sans','DejaVu Sans',sans-serif;font-size:10.5px;font-weight:400;color:#444;">F</span>
<div class="abs" style="left:508px;top:154px;width:1px;height:12px;background:#c4c4c4"></div>
<div class="abs" style="left:509px;top:152px;width:47px;height:15px;background:#d4d4d4;border-bottom:2px solid #217346"></div>
<span class="t" style="left:528.21px;top:154.26px;line-height:12.07px;font-family:'Liberation Sans','DejaVu Sans',sans-serif;font-size:10.5px;font-weight:400;color:#217346;">G</span>
<div class="abs" style="left:556px;top:154px;width:1px;height:12px;background:#c4c4c4"></div>
<span class="t" style="left:576.50px;top:154.26px;line-height:12.07px;font-family:'Liberation Sans','DejaVu Sans',sans-serif;font-size:10.5px;font-weight:400;color:#444;">H</span>
<div class="abs" style="left:604px;top:154px;width:1px;height:12px;background:#c4c4c4"></div>
<span class="t" style="left:626.84px;top:154.26px;line-height:12.07px;font-family:'Liberation Sans','DejaVu Sans',sans-serif;font-size:10.5px;font-weight:400;color:#444;">I</span>
<div class="abs" style="left:652px;top:154px;width:1px;height:12px;background:#c4c4c4"></div>
<span class="t" style="left:673.67px;top:154.26px;line-height:12.07px;font-family:'Liberation Sans','DejaVu Sans',sans-serif;font-size:10.5px;font-weight:400;color:#444;">J</span>
<div class="abs" style="left:700px;top:154px;width:1px;height:12px;background:#c4c4c4"></div>
<span class="t" style="left:720.79px;top:154.26px;line-height:12.07px;font-family:'Liberation Sans','DejaVu Sans',sans-serif;font-size:10.5px;font-weight:400;color:#444;">K</span>
<div class="abs" style="left:748px;top:154px;width:1px;height:12px;background:#c4c4c4"></div>
<span class="t" style="left:769.38px;top:154.26px;line-height:12.07px;font-family:'Liberation Sans','DejaVu Sans',sans-serif;font-size:10.5px;font-weight:400;color:#444;">L</span>
<div class="abs" style="left:796px;top:154px;width:1px;height:12px;background:#c4c4c4"></div>
<span class="t" style="left:815.92px;top:154.26px;line-height:12.07px;font-family:'Liberation Sans','DejaVu Sans',sans-serif;font-size:10.5px;font-weight:400;color:#444;">M</span>
<div class="abs" style="left:844px;top:154px;width:1px;height:12px;background:#c4c4c4"></div>
<span class="t" style="left:864.50px;top:154.26px;line-height:12.07px;font-family:'Liberation Sans','DejaVu Sans',sans-serif;font-size:10.5px;font-weight:400;color:#444;">N</span>
<div class="abs" style="left:892px;top:154px;width:1px;height:12px;background:#c4c4c4"></div>
<span class="t" style="left:912.71px;top:154.26px;line-height:12.07px;font-family:'Liberation Sans','DejaVu Sans',sans-serif;font-size:10.5px;font-weight:400;color:#444;">O</span>
<div class="abs" style="left:941px;top:154px;width:1px;height:12px;background:#c4c4c4"></div>
<span class="t" style="left:961.79px;top:154.26px;line-height:12.07px;font-family:'Liberation Sans','DejaVu Sans',sans-serif;font-size:10.5px;font-weight:400;color:#444;">P</span>
<div class="abs" style="left:989px;top:154px;width:1px;height:12px;background:#c4c4c4"></div>
<div id="grid" class="abs">
<svg width="1008" height="342" style="left:0;top:0" shape-rendering="crispEdges" stroke="#d6d6d6" stroke-width="1"><path d="M19 14.5H1008"/><path d="M19 29.5H1008"/><path d="M19 44.5H1008"/><path d="M19 59.5H1008"/><path d="M19 74.5H1008"/><path d="M19 89.5H1008"/><path d="M19 104.5H1008"/><path d="M19 119.5H1008"/><path d="M19 134.5H1008"/><path d="M19 149.5H1008"/><path d="M19 164.5H1008"/><path d="M19 179.5H1008"/><path d="M19 194.5H1008"/><path d="M19 209.5H1008"/><path d="M19 224.5H1008"/><path d="M19 239.5H1008"/><path d="M19 254.5H1008"/><path d="M19 269.5H1008"/><path d="M19 284.5H1008"/><path d="M19 299.5H1008"/><path d="M19 314.5H1008"/><path d="M19 329.5H1008"/><path d="M19 344.5H1008"/><path d="M87.5 0V342"/><path d="M189.5 0V342"/><path d="M276.5 0V342"/><path d="M365.5 0V342"/><path d="M459.5 0V342"/><path d="M507.5 0V342"/><path d="M555.5 0V342"/><path d="M603.5 0V342"/><path d="M651.5 0V342"/><path d="M699.5 0V342"/><path d="M747.5 0V342"/><path d="M795.5 0V342"/><path d="M843.5 0V342"/><path d="M891.5 0V342"/><path d="M940.5 0V342"/><path d="M988.5 0V342"/></svg>
<div class="abs" style="left:0;top:0;width:19px;height:342px;background:#e6e6e6;border-right:1px solid #bdbdbd"></div>
<div class="abs" style="left:0;top:14px;width:18px;height:1px;background:#c9c9c9"></div>
<div class="abs" style="left:0;top:29px;width:18px;height:1px;background:#c9c9c9"></div>
<div class="abs" style="left:0;top:44px;width:18px;height:1px;background:#c9c9c9"></div>
<div class="abs" style="left:0;top:59px;width:18px;height:1px;background:#c9c9c9"></div>
<div class="abs" style="left:0;top:74px;width:18px;height:1px;background:#c9c9c9"></div>
<div class="abs" style="left:0;top:89px;width:18px;height:1px;background:#c9c9c9"></div>
<div class="abs" style="left:0;top:104px;width:18px;height:1px;background:#c9c9c9"></div>
<div class="abs" style="left:0;top:119px;width:18px;height:1px;background:#c9c9c9"></div>
<div class="abs" style="left:0;top:134px;width:18px;height:1px;background:#c9c9c9"></div>
<div class="abs" style="left:0;top:149px;width:18px;height:1px;background:#c9c9c9"></div>
<div class="abs" style="left:0;top:164px;width:18px;height:1px;background:#c9c9c9"></div>
<div class="abs" style="left:0;top:179px;width:18px;height:1px;background:#c9c9c9"></div>
<div class="abs" style="left:0;top:194px;width:18px;height:1px;background:#c9c9c9"></div>
<div class="abs" style="left:0;top:209px;width:18px;height:1px;background:#c9c9c9"></div>
<div class="abs" style="left:0;top:224px;width:18px;height:1px;background:#c9c9c9"></div>
<div class="abs" style="left:0;top:239px;width:18px;height:1px;background:#c9c9c9"></div>
<div class="abs" style="left:0;top:254px;width:18px;height:1px;background:#c9c9c9"></div>
<div class="abs" style="left:0;top:269px;width:18px;height:1px;background:#c9c9c9"></div>
<div class="abs" style="left:0;top:284px;width:18px;height:1px;background:#c9c9c9"></div>
<div class="abs" style="left:0;top:299px;width:18px;height:1px;background:#c9c9c9"></div>
<div class="abs" style="left:0;top:314px;width:18px;height:1px;background:#c9c9c9"></div>
<div class="abs" style="left:0;top:329px;width:18px;height:1px;background:#c9c9c9"></div>
<div class="abs" style="left:0;top:330px;width:19px;height:15px;background:#d4d4d4;border-right:2px solid #217346"></div>
<div class="abs" style="left:0;top:344px;width:18px;height:1px;background:#c9c9c9"></div>
<div class="abs" style="left:19px;top:0;width:442px;height:285px;background:#fff"></div>
<div class="abs" style="left:19px;top:0;width:442px;height:14.500px;background:#d9e1f2"></div>
<div class="abs" style="left:19px;top:270px;width:442px;height:15px;background:#d9e1f2;border-top:1px solid #a6b8df"></div>
<div class="abs" style="left:19px;top:14.0px;width:442px;height:1px;background:#a6b8df"></div>
<div class="abs" style="left:19px;top:29.0px;width:442px;height:1px;background:#a6b8df"></div>
<div class="abs" style="left:19px;top:44.0px;width:442px;height:1px;background:#a6b8df"></div>
<div class="abs" style="left:19px;top:59.0px;width:442px;height:1px;background:#a6b8df"></div>
<div class="abs" style="left:19px;top:74.0px;width:442px;height:1px;background:#a6b8df"></div>
<div class="abs" style="left:19px;top:89.0px;width:442px;height:1px;background:#a6b8df"></div>
<div class="abs" style="left:19px;top:104.0px;width:442px;height:1px;background:#a6b8df"></div>
<div class="abs" style="left:19px;top:119.0px;width:442px;height:1px;background:#a6b8df"></div>
<div class="abs" style="left:19px;top:134.0px;width:442px;height:1px;background:#a6b8df"></div>
<div class="abs" style="left:19px;top:149.0px;width:442px;height:1px;background:#a6b8df"></div>
<div class="abs" style="left:19px;top:164.0px;width:442px;height:1px;background:#a6b8df"></div>
<div class="abs" style="left:19px;top:179.0px;width:442px;height:1px;background:#a6b8df"></div>
<div class="abs" style="left:19px;top:194.0px;width:442px;height:1px;background:#a6b8df"></div>
<div class="abs" style="left:19px;top:209.0px;width:442px;height:1px;background:#a6b8df"></div>
<div class="abs" style="left:19px;top:224.0px;width:442px;height:1px;background:#a6b8df"></div>
<div class="abs" style="left:19px;top:239.0px;width:442px;height:1px;background:#a6b8df"></div>
<div class="abs" style="left:19px;top:254.0px;width:442px;height:1px;background:#a6b8df"></div>
<div class="abs" style="left:19px;top:269.0px;width:442px;height:1px;background:#a6b8df"></div>
<div class="abs" style="left:75px;top:2px;width:11.500px;height:11px;background:linear-gradient(#fff,#e9e9e9);border:1px solid #b5b5b5"></div>
<svg width="6" height="4" style="left:78.200px;top:6.500px"><path d="M0 0h5.400L2.700 3z" fill="#555"/></svg>
</div>
<span class="t" style="left:21.50px;top:169.65px;line-height:11.50px;font-family:'Liberation Sans','DejaVu Sans',sans-serif;font-size:10px;font-weight:700;color:#000;transform:scaleX(0.9140);transform-origin:left center;">Row Labels</span>
<span class="t" style="left:90.40px;top:169.65px;line-height:11.50px;font-family:'Liberation Sans','DejaVu Sans',sans-serif;font-size:10px;font-weight:700;color:#000;transform:scaleX(0.8852);transform-origin:left center;">Sum of</span>
<span class="t" style="left:124.30px;top:169.31px;line-height:10.58px;font-family:'Liberation Sans','DejaVu Sans',sans-serif;font-size:9.2px;font-weight:700;color:#000;transform:scale(0.8616,1.220);transform-origin:left center;-webkit-text-stroke:.25px #000;">الكثافة السكانية</span>
<span class="t" style="left:192.70px;top:169.65px;line-height:11.50px;font-family:'Liberation Sans','DejaVu Sans',sans-serif;font-size:10px;font-weight:700;color:#000;transform:scaleX(0.8852);transform-origin:left center;">Sum of</span>
<span class="t" style="left:227.60px;top:169.31px;line-height:10.58px;font-family:'Liberation Sans','DejaVu Sans',sans-serif;font-size:9.2px;font-weight:700;color:#000;transform:scale(0.8088,1.220);transform-origin:left center;-webkit-text-stroke:.25px #000;">المستهدفين</span>
<span class="t" style="left:279.60px;top:169.65px;line-height:11.50px;font-family:'Liberation Sans','DejaVu Sans',sans-serif;font-size:10px;font-weight:700;color:#000;transform:scaleX(0.9410);transform-origin:left center;">Average of</span>
<span class="t" style="left:330.90px;top:169.31px;line-height:10.58px;font-family:'Liberation Sans','DejaVu Sans',sans-serif;font-size:9.2px;font-weight:700;color:#000;transform:scale(0.9020,1.220);transform-origin:left center;-webkit-text-stroke:.25px #000;">التغطية</span>
<span class="t" style="left:368.50px;top:169.65px;line-height:11.50px;font-family:'Liberation Sans','DejaVu Sans',sans-serif;font-size:10px;font-weight:700;color:#000;transform:scaleX(0.8444);transform-origin:left center;">Count of</span>
<span class="t" style="left:407.00px;top:169.31px;line-height:10.58px;font-family:'Liberation Sans','DejaVu Sans',sans-serif;font-size:9.2px;font-weight:700;color:#000;transform:scale(1.0284,1.220);transform-origin:left center;-webkit-text-stroke:.25px #000;">التاريخ</span>
<span class="t" style="left:31.00px;top:185.20px;line-height:10.00px;font-family:'Liberation Sans','DejaVu Sans',sans-serif;font-size:8.7px;font-weight:700;color:#000;transform:scale(0.8427,1.220);transform-origin:left center;-webkit-text-stroke:.25px #000;">أربيل</span>
<span class="t" style="left:154.43px;top:184.95px;line-height:11.50px;font-family:'Liberation Sans','DejaVu Sans',sans-serif;font-size:10px;font-weight:700;color:#000;transform:scaleX(0.9258);transform-origin:right center;">467397</span>
<span class="t" style="left:241.82px;top:184.95px;line-height:11.50px;font-family:'Liberation Sans','DejaVu Sans',sans-serif;font-size:10px;font-weight:700;color:#000;transform:scaleX(0.9258);transform-origin:right center;">344237</span>
<span class="t" style="left:344.18px;top:184.95px;line-height:11.50px;font-family:'Liberation Sans','DejaVu Sans',sans-serif;font-size:10px;font-weight:700;color:#000;transform:scaleX(0.8918);transform-origin:right center;">74%</span>
<span class="t" style="left:447.68px;top:184.95px;line-height:11.50px;font-family:'Liberation Sans','DejaVu Sans',sans-serif;font-size:10px;font-weight:700;color:#000;transform:scaleX(0.9258);transform-origin:right center;">42</span>
<span class="t" style="left:31.00px;top:200.20px;line-height:10.00px;font-family:'Liberation Sans','DejaVu Sans',sans-serif;font-size:8.7px;font-weight:700;color:#000;transform:scale(0.8968,1.220);transform-origin:left center;-webkit-text-stroke:.25px #000;">الأنبار</span>
<span class="t" style="left:154.43px;top:199.95px;line-height:11.50px;font-family:'Liberation Sans','DejaVu Sans',sans-serif;font-size:10px;font-weight:700;color:#000;transform:scaleX(0.9258);transform-origin:right center;">312781</span>
<span class="t" style="left:241.82px;top:199.95px;line-height:11.50px;font-family:'Liberation Sans','DejaVu Sans',sans-serif;font-size:10px;font-weight:700;color:#000;transform:scaleX(0.9258);transform-origin:right center;">231598</span>
<span class="t" style="left:344.18px;top:199.95px;line-height:11.50px;font-family:'Liberation Sans','DejaVu Sans',sans-serif;font-size:10px;font-weight:700;color:#000;transform:scaleX(0.8918);transform-origin:right center;">78%</span>
<span class="t" style="left:447.68px;top:199.95px;line-height:11.50px;font-family:'Liberation Sans','DejaVu Sans',sans-serif;font-size:10px;font-weight:700;color:#000;transform:scaleX(0.9258);transform-origin:right center;">29</span>
<span class="t" style="left:31.00px;top:215.20px;line-height:10.00px;font-family:'Liberation Sans','DejaVu Sans',sans-serif;font-size:8.7px;font-weight:700;color:#000;transform:scale(0.8307,1.220);transform-origin:left center;-webkit-text-stroke:.25px #000;">البصرة</span>
<span class="t" style="left:154.43px;top:214.95px;line-height:11.50px;font-family:'Liberation Sans','DejaVu Sans',sans-serif;font-size:10px;font-weight:700;color:#000;transform:scaleX(0.9258);transform-origin:right center;">347390</span>
<span class="t" style="left:241.82px;top:214.95px;line-height:11.50px;font-family:'Liberation Sans','DejaVu Sans',sans-serif;font-size:10px;font-weight:700;color:#000;transform:scaleX(0.9258);transform-origin:right center;">247282</span>
<span class="t" style="left:344.18px;top:214.95px;line-height:11.50px;font-family:'Liberation Sans','DejaVu Sans',sans-serif;font-size:10px;font-weight:700;color:#000;transform:scaleX(0.8918);transform-origin:right center;">70%</span>
<span class="t" style="left:447.68px;top:214.95px;line-height:11.50px;font-family:'Liberation Sans','DejaVu Sans',sans-serif;font-size:10px;font-weight:700;color:#000;transform:scaleX(0.9258);transform-origin:right center;">30</span>
<span class="t" style="left:31.00px;top:230.20px;line-height:10.00px;font-family:'Liberation Sans','DejaVu Sans',sans-serif;font-size:8.7px;font-weight:700;color:#000;transform:scale(0.8998,1.220);transform-origin:left center;-webkit-text-stroke:.25px #000;">السليمانية</span>
<span class="t" style="left:154.43px;top:229.95px;line-height:11.50px;font-family:'Liberation Sans','DejaVu Sans',sans-serif;font-size:10px;font-weight:700;color:#000;transform:scaleX(0.9258);transform-origin:right center;">868423</span>
<span class="t" style="left:241.82px;top:229.95px;line-height:11.50px;font-family:'Liberation Sans','DejaVu Sans',sans-serif;font-size:10px;font-weight:700;color:#000;transform:scaleX(0.9258);transform-origin:right center;">630474</span>
<span class="t" style="left:344.18px;top:229.95px;line-height:11.50px;font-family:'Liberation Sans','DejaVu Sans',sans-serif;font-size:10px;font-weight:700;color:#000;transform:scaleX(0.8918);transform-origin:right center;">73%</span>
<span class="t" style="left:447.68px;top:229.95px;line-height:11.50px;font-family:'Liberation Sans','DejaVu Sans',sans-serif;font-size:10px;font-weight:700;color:#000;transform:scaleX(0.9258);transform-origin:right center;">65</span>
<span class="t" style="left:31.00px;top:245.20px;line-height:10.00px;font-family:'Liberation Sans','DejaVu Sans',sans-serif;font-size:8.7px;font-weight:700;color:#000;transform:scale(0.9048,1.220);transform-origin:left center;-webkit-text-stroke:.25px #000;">القادسية</span>
<span class="t" style="left:154.43px;top:244.95px;line-height:11.50px;font-family:'Liberation Sans','DejaVu Sans',sans-serif;font-size:10px;font-weight:700;color:#000;transform:scaleX(0.9258);transform-origin:right center;">195976</span>
<span class="t" style="left:241.82px;top:244.95px;line-height:11.50px;font-family:'Liberation Sans','DejaVu Sans',sans-serif;font-size:10px;font-weight:700;color:#000;transform:scaleX(0.9258);transform-origin:right center;">139985</span>
<span class="t" style="left:344.18px;top:244.95px;line-height:11.50px;font-family:'Liberation Sans','DejaVu Sans',sans-serif;font-size:10px;font-weight:700;color:#000;transform:scaleX(0.8918);transform-origin:right center;">74%</span>
<span class="t" style="left:447.68px;top:244.95px;line-height:11.50px;font-family:'Liberation Sans','DejaVu Sans',sans-serif;font-size:10px;font-weight:700;color:#000;transform:scaleX(0.9258);transform-origin:right center;">16</span>
<span class="t" style="left:31.00px;top:260.20px;line-height:10.00px;font-family:'Liberation Sans','DejaVu Sans',sans-serif;font-size:8.7px;font-weight:700;color:#000;transform:scale(1.0225,1.220);transform-origin:left center;-webkit-text-stroke:.25px #000;">النجف</span>
<span class="t" style="left:154.43px;top:259.95px;line-height:11.50px;font-family:'Liberation Sans','DejaVu Sans',sans-serif;font-size:10px;font-weight:700;color:#000;transform:scaleX(0.9258);transform-origin:right center;">168336</span>
<span class="t" style="left:241.82px;top:259.95px;line-height:11.50px;font-family:'Liberation Sans','DejaVu Sans',sans-serif;font-size:10px;font-weight:700;color:#000;transform:scaleX(0.9258);transform-origin:right center;">125969</span>
<span class="t" style="left:344.18px;top:259.95px;line-height:11.50px;font-family:'Liberation Sans','DejaVu Sans',sans-serif;font-size:10px;font-weight:700;color:#000;transform:scaleX(0.8918);transform-origin:right center;">77%</span>
<span class="t" style="left:448.22px;top:259.95px;line-height:11.50px;font-family:'Liberation Sans','DejaVu Sans',sans-serif;font-size:10px;font-weight:700;color:#000;transform:scaleX(0.9737);transform-origin:right center;">11</span>
<span class="t" style="left:31.00px;top:275.20px;line-height:10.00px;font-family:'Liberation Sans','DejaVu Sans',sans-serif;font-size:8.7px;font-weight:700;color:#000;transform:scale(0.9118,1.220);transform-origin:left center;-webkit-text-stroke:.25px #000;">بابل</span>
<span class="t" style="left:154.43px;top:274.95px;line-height:11.50px;font-family:'Liberation Sans','DejaVu Sans',sans-serif;font-size:10px;font-weight:700;color:#000;transform:scaleX(0.9258);transform-origin:right center;">210940</span>
<span class="t" style="left:241.82px;top:274.95px;line-height:11.50px;font-family:'Liberation Sans','DejaVu Sans',sans-serif;font-size:10px;font-weight:700;color:#000;transform:scaleX(0.9258);transform-origin:right center;">152131</span>
<span class="t" style="left:344.18px;top:274.95px;line-height:11.50px;font-family:'Liberation Sans','DejaVu Sans',sans-serif;font-size:10px;font-weight:700;color:#000;transform:scaleX(0.8918);transform-origin:right center;">74%</span>
<span class="t" style="left:447.68px;top:274.95px;line-height:11.50px;font-family:'Liberation Sans','DejaVu Sans',sans-serif;font-size:10px;font-weight:700;color:#000;transform:scaleX(0.9258);transform-origin:right center;">18</span>
<svg width="7" height="7" style="left:23px;top:276.7px"><rect x=".5" y=".5" width="6" height="6" fill="#fff" stroke="#9a9a9a"/><path d="M2 3.500h3M3.500 2v3" stroke="#555" stroke-width=".9"/></svg>
<span class="t" style="left:31.00px;top:290.20px;line-height:10.00px;font-family:'Liberation Sans','DejaVu Sans',sans-serif;font-size:8.7px;font-weight:700;color:#000;transform:scale(1.0667,1.220);transform-origin:left center;-webkit-text-stroke:.25px #000;">بغداد</span>
<span class="t" style="left:154.43px;top:289.95px;line-height:11.50px;font-family:'Liberation Sans','DejaVu Sans',sans-serif;font-size:10px;font-weight:700;color:#000;transform:scaleX(0.9258);transform-origin:right center;">569307</span>
<span class="t" style="left:241.82px;top:289.95px;line-height:11.50px;font-family:'Liberation Sans','DejaVu Sans',sans-serif;font-size:10px;font-weight:700;color:#000;transform:scaleX(0.9258);transform-origin:right center;">403691</span>
<span class="t" style="left:344.18px;top:289.95px;line-height:11.50px;font-family:'Liberation Sans','DejaVu Sans',sans-serif;font-size:10px;font-weight:700;color:#000;transform:scaleX(0.8918);transform-origin:right center;">72%</span>
<span class="t" style="left:447.68px;top:289.95px;line-height:11.50px;font-family:'Liberation Sans','DejaVu Sans',sans-serif;font-size:10px;font-weight:700;color:#000;transform:scaleX(0.9258);transform-origin:right center;">49</span>
<svg width="7" height="7" style="left:23px;top:291.7px"><rect x=".5" y=".5" width="6" height="6" fill="#fff" stroke="#9a9a9a"/><path d="M2 3.500h3M3.500 2v3" stroke="#555" stroke-width=".9"/></svg>
<span class="t" style="left:31.00px;top:305.20px;line-height:10.00px;font-family:'Liberation Sans','DejaVu Sans',sans-serif;font-size:8.7px;font-weight:700;color:#000;transform:scale(0.9627,1.220);transform-origin:left center;-webkit-text-stroke:.25px #000;">دهوك</span>
<span class="t" style="left:154.43px;top:304.95px;line-height:11.50px;font-family:'Liberation Sans','DejaVu Sans',sans-serif;font-size:10px;font-weight:700;color:#000;transform:scaleX(0.9258);transform-origin:right center;">307488</span>
<span class="t" style="left:241.82px;top:304.95px;line-height:11.50px;font-family:'Liberation Sans','DejaVu Sans',sans-serif;font-size:10px;font-weight:700;color:#000;transform:scaleX(0.9258);transform-origin:right center;">247223</span>
<span class="t" style="left:344.18px;top:304.95px;line-height:11.50px;font-family:'Liberation Sans','DejaVu Sans',sans-serif;font-size:10px;font-weight:700;color:#000;transform:scaleX(0.8918);transform-origin:right center;">79%</span>
<span class="t" style="left:447.68px;top:304.95px;line-height:11.50px;font-family:'Liberation Sans','DejaVu Sans',sans-serif;font-size:10px;font-weight:700;color:#000;transform:scaleX(0.9258);transform-origin:right center;">26</span>
<svg width="7" height="7" style="left:23px;top:306.7px"><rect x=".5" y=".5" width="6" height="6" fill="#fff" stroke="#9a9a9a"/><path d="M2 3.500h3M3.500 2v3" stroke="#555" stroke-width=".9"/></svg>
<span class="t" style="left:31.00px;top:320.20px;line-height:10.00px;font-family:'Liberation Sans','DejaVu Sans',sans-serif;font-size:8.7px;font-weight:700;color:#000;transform:scale(0.7376,1.220);transform-origin:left center;-webkit-text-stroke:.25px #000;">ديالى</span>
<span class="t" style="left:154.43px;top:319.95px;line-height:11.50px;font-family:'Liberation Sans','DejaVu Sans',sans-serif;font-size:10px;font-weight:700;color:#000;transform:scaleX(0.9258);transform-origin:right center;">389533</span>
<span class="t" style="left:241.82px;top:319.95px;line-height:11.50px;font-family:'Liberation Sans','DejaVu Sans',sans-serif;font-size:10px;font-weight:700;color:#000;transform:scaleX(0.9258);transform-origin:right center;">280750</span>
<span class="t" style="left:344.18px;top:319.95px;line-height:11.50px;font-family:'Liberation Sans','DejaVu Sans',sans-serif;font-size:10px;font-weight:700;color:#000;transform:scaleX(0.8918);transform-origin:right center;">71%</span>
<span class="t" style="left:447.68px;top:319.95px;line-height:11.50px;font-family:'Liberation Sans','DejaVu Sans',sans-serif;font-size:10px;font-weight:700;color:#000;transform:scaleX(0.9258);transform-origin:right center;">28</span>
<svg width="7" height="7" style="left:23px;top:321.7px"><rect x=".5" y=".5" width="6" height="6" fill="#fff" stroke="#9a9a9a"/><path d="M2 3.500h3M3.500 2v3" stroke="#555" stroke-width=".9"/></svg>
<span class="t" style="left:31.00px;top:335.20px;line-height:10.00px;font-family:'Liberation Sans','DejaVu Sans',sans-serif;font-size:8.7px;font-weight:700;color:#000;transform:scale(0.8681,1.220);transform-origin:left center;-webkit-text-stroke:.25px #000;">ذي قار</span>
<span class="t" style="left:154.43px;top:334.95px;line-height:11.50px;font-family:'Liberation Sans','DejaVu Sans',sans-serif;font-size:10px;font-weight:700;color:#000;transform:scaleX(0.9258);transform-origin:right center;">240900</span>
<span class="t" style="left:241.82px;top:334.95px;line-height:11.50px;font-family:'Liberation Sans','DejaVu Sans',sans-serif;font-size:10px;font-weight:700;color:#000;transform:scaleX(0.9258);transform-origin:right center;">181259</span>
<span class="t" style="left:344.18px;top:334.95px;line-height:11.50px;font-family:'Liberation Sans','DejaVu Sans',sans-serif;font-size:10px;font-weight:700;color:#000;transform:scaleX(0.8918);transform-origin:right center;">74%</span>
<span class="t" style="left:447.68px;top:334.95px;line-height:11.50px;font-family:'Liberation Sans','DejaVu Sans',sans-serif;font-size:10px;font-weight:700;color:#000;transform:scaleX(0.9258);transform-origin:right center;">20</span>
<svg width="7" height="7" style="left:23px;top:336.7px"><rect x=".5" y=".5" width="6" height="6" fill="#fff" stroke="#9a9a9a"/><path d="M2 3.500h3M3.500 2v3" stroke="#555" stroke-width=".9"/></svg>
<span class="t" style="left:31.00px;top:350.20px;line-height:10.00px;font-family:'Liberation Sans','DejaVu Sans',sans-serif;font-size:8.7px;font-weight:700;color:#000;transform:scale(0.9562,1.220);transform-origin:left center;-webkit-text-stroke:.25px #000;">صلاح الدين</span>
<span class="t" style="left:154.43px;top:349.95px;line-height:11.50px;font-family:'Liberation Sans','DejaVu Sans',sans-serif;font-size:10px;font-weight:700;color:#000;transform:scaleX(0.9258);transform-origin:right center;">330153</span>
<span class="t" style="left:241.82px;top:349.95px;line-height:11.50px;font-family:'Liberation Sans','DejaVu Sans',sans-serif;font-size:10px;font-weight:700;color:#000;transform:scaleX(0.9258);transform-origin:right center;">239071</span>
<span class="t" style="left:344.18px;top:349.95px;line-height:11.50px;font-family:'Liberation Sans','DejaVu Sans',sans-serif;font-size:10px;font-weight:700;color:#000;transform:scaleX(0.8918);transform-origin:right center;">72%</span>
<span class="t" style="left:447.68px;top:349.95px;line-height:11.50px;font-family:'Liberation Sans','DejaVu Sans',sans-serif;font-size:10px;font-weight:700;color:#000;transform:scaleX(0.9258);transform-origin:right center;">21</span>
<svg width="7" height="7" style="left:23px;top:351.7px"><rect x=".5" y=".5" width="6" height="6" fill="#fff" stroke="#9a9a9a"/><path d="M2 3.500h3M3.500 2v3" stroke="#555" stroke-width=".9"/></svg>
<span class="t" style="left:31.00px;top:365.20px;line-height:10.00px;font-family:'Liberation Sans','DejaVu Sans',sans-serif;font-size:8.7px;font-weight:700;color:#000;transform:scale(0.8883,1.220);transform-origin:left center;-webkit-text-stroke:.25px #000;">كربلاء</span>
<span class="t" style="left:154.43px;top:364.95px;line-height:11.50px;font-family:'Liberation Sans','DejaVu Sans',sans-serif;font-size:10px;font-weight:700;color:#000;transform:scaleX(0.9258);transform-origin:right center;">100106</span>
<span class="t" style="left:247.39px;top:364.95px;line-height:11.50px;font-family:'Liberation Sans','DejaVu Sans',sans-serif;font-size:10px;font-weight:700;color:#000;transform:scaleX(0.9258);transform-origin:right center;">79766</span>
<span class="t" style="left:344.18px;top:364.95px;line-height:11.50px;font-family:'Liberation Sans','DejaVu Sans',sans-serif;font-size:10px;font-weight:700;color:#000;transform:scaleX(0.8918);transform-origin:right center;">77%</span>
<span class="t" style="left:453.24px;top:364.95px;line-height:11.50px;font-family:'Liberation Sans','DejaVu Sans',sans-serif;font-size:10px;font-weight:700;color:#000;transform:scaleX(0.9258);transform-origin:right center;">9</span>
<svg width="7" height="7" style="left:23px;top:366.7px"><rect x=".5" y=".5" width="6" height="6" fill="#fff" stroke="#9a9a9a"/><path d="M2 3.500h3M3.500 2v3" stroke="#555" stroke-width=".9"/></svg>
<span class="t" style="left:31.00px;top:380.20px;line-height:10.00px;font-family:'Liberation Sans','DejaVu Sans',sans-serif;font-size:8.7px;font-weight:700;color:#000;transform:scale(0.8298,1.220);transform-origin:left center;-webkit-text-stroke:.25px #000;">كركوك</span>
<span class="t" style="left:154.43px;top:379.95px;line-height:11.50px;font-family:'Liberation Sans','DejaVu Sans',sans-serif;font-size:10px;font-weight:700;color:#000;transform:scaleX(0.9258);transform-origin:right center;">210248</span>
<span class="t" style="left:241.82px;top:379.95px;line-height:11.50px;font-family:'Liberation Sans','DejaVu Sans',sans-serif;font-size:10px;font-weight:700;color:#000;transform:scaleX(0.9258);transform-origin:right center;">151444</span>
<span class="t" style="left:344.18px;top:379.95px;line-height:11.50px;font-family:'Liberation Sans','DejaVu Sans',sans-serif;font-size:10px;font-weight:700;color:#000;transform:scaleX(0.8918);transform-origin:right center;">71%</span>
<span class="t" style="left:447.68px;top:379.95px;line-height:11.50px;font-family:'Liberation Sans','DejaVu Sans',sans-serif;font-size:10px;font-weight:700;color:#000;transform:scaleX(0.9258);transform-origin:right center;">16</span>
<svg width="7" height="7" style="left:23px;top:381.7px"><rect x=".5" y=".5" width="6" height="6" fill="#fff" stroke="#9a9a9a"/><path d="M2 3.500h3M3.500 2v3" stroke="#555" stroke-width=".9"/></svg>
<span class="t" style="left:31.00px;top:395.20px;line-height:10.00px;font-family:'Liberation Sans','DejaVu Sans',sans-serif;font-size:8.7px;font-weight:700;color:#000;transform:scale(0.8435,1.220);transform-origin:left center;-webkit-text-stroke:.25px #000;">ميسان</span>
<span class="t" style="left:154.43px;top:394.95px;line-height:11.50px;font-family:'Liberation Sans','DejaVu Sans',sans-serif;font-size:10px;font-weight:700;color:#000;transform:scaleX(0.9258);transform-origin:right center;">177822</span>
<span class="t" style="left:241.82px;top:394.95px;line-height:11.50px;font-family:'Liberation Sans','DejaVu Sans',sans-serif;font-size:10px;font-weight:700;color:#000;transform:scaleX(0.9258);transform-origin:right center;">136989</span>
<span class="t" style="left:344.18px;top:394.95px;line-height:11.50px;font-family:'Liberation Sans','DejaVu Sans',sans-serif;font-size:10px;font-weight:700;color:#000;transform:scaleX(0.8918);transform-origin:right center;">80%</span>
<span class="t" style="left:447.68px;top:394.95px;line-height:11.50px;font-family:'Liberation Sans','DejaVu Sans',sans-serif;font-size:10px;font-weight:700;color:#000;transform:scaleX(0.9258);transform-origin:right center;">16</span>
<svg width="7" height="7" style="left:23px;top:396.7px"><rect x=".5" y=".5" width="6" height="6" fill="#fff" stroke="#9a9a9a"/><path d="M2 3.500h3M3.500 2v3" stroke="#555" stroke-width=".9"/></svg>
<span class="t" style="left:31.00px;top:410.20px;line-height:10.00px;font-family:'Liberation Sans','DejaVu Sans',sans-serif;font-size:8.7px;font-weight:700;color:#000;transform:scale(0.9257,1.220);transform-origin:left center;-webkit-text-stroke:.25px #000;">نينوى</span>
<span class="t" style="left:154.43px;top:409.95px;line-height:11.50px;font-family:'Liberation Sans','DejaVu Sans',sans-serif;font-size:10px;font-weight:700;color:#000;transform:scaleX(0.9258);transform-origin:right center;">469866</span>
<span class="t" style="left:241.82px;top:409.95px;line-height:11.50px;font-family:'Liberation Sans','DejaVu Sans',sans-serif;font-size:10px;font-weight:700;color:#000;transform:scaleX(0.9258);transform-origin:right center;">374393</span>
<span class="t" style="left:344.18px;top:409.95px;line-height:11.50px;font-family:'Liberation Sans','DejaVu Sans',sans-serif;font-size:10px;font-weight:700;color:#000;transform:scaleX(0.8918);transform-origin:right center;">78%</span>
<span class="t" style="left:447.68px;top:409.95px;line-height:11.50px;font-family:'Liberation Sans','DejaVu Sans',sans-serif;font-size:10px;font-weight:700;color:#000;transform:scaleX(0.9258);transform-origin:right center;">32</span>
<svg width="7" height="7" style="left:23px;top:411.7px"><rect x=".5" y=".5" width="6" height="6" fill="#fff" stroke="#9a9a9a"/><path d="M2 3.500h3M3.500 2v3" stroke="#555" stroke-width=".9"/></svg>
<span class="t" style="left:31.00px;top:425.20px;line-height:10.00px;font-family:'Liberation Sans','DejaVu Sans',sans-serif;font-size:8.7px;font-weight:700;color:#000;transform:scale(0.8386,1.220);transform-origin:left center;-webkit-text-stroke:.25px #000;">واسط</span>
<span class="t" style="left:154.43px;top:424.95px;line-height:11.50px;font-family:'Liberation Sans','DejaVu Sans',sans-serif;font-size:10px;font-weight:700;color:#000;transform:scaleX(0.9258);transform-origin:right center;">210827</span>
<span class="t" style="left:241.82px;top:424.95px;line-height:11.50px;font-family:'Liberation Sans','DejaVu Sans',sans-serif;font-size:10px;font-weight:700;color:#000;transform:scaleX(0.9258);transform-origin:right center;">163232</span>
<span class="t" style="left:344.18px;top:424.95px;line-height:11.50px;font-family:'Liberation Sans','DejaVu Sans',sans-serif;font-size:10px;font-weight:700;color:#000;transform:scaleX(0.8918);transform-origin:right center;">78%</span>
<span class="t" style="left:447.68px;top:424.95px;line-height:11.50px;font-family:'Liberation Sans','DejaVu Sans',sans-serif;font-size:10px;font-weight:700;color:#000;transform:scaleX(0.9258);transform-origin:right center;">17</span>
<svg width="7" height="7" style="left:23px;top:426.7px"><rect x=".5" y=".5" width="6" height="6" fill="#fff" stroke="#9a9a9a"/><path d="M2 3.500h3M3.500 2v3" stroke="#555" stroke-width=".9"/></svg>
<span class="t" style="left:21.50px;top:439.95px;line-height:11.50px;font-family:'Liberation Sans','DejaVu Sans',sans-serif;font-size:10px;font-weight:700;color:#000;transform:scaleX(0.9661);transform-origin:left center;">Grand Total</span>
<span class="t" style="left:148.86px;top:439.95px;line-height:11.50px;font-family:'Liberation Sans','DejaVu Sans',sans-serif;font-size:10px;font-weight:700;color:#000;transform:scaleX(0.9258);transform-origin:right center;">5577493</span>
<span class="t" style="left:236.26px;top:439.95px;line-height:11.50px;font-family:'Liberation Sans','DejaVu Sans',sans-serif;font-size:10px;font-weight:700;color:#000;transform:scaleX(0.9258);transform-origin:right center;">4129494</span>
<span class="t" style="left:344.18px;top:439.95px;line-height:11.50px;font-family:'Liberation Sans','DejaVu Sans',sans-serif;font-size:10px;font-weight:700;color:#000;transform:scaleX(0.8918);transform-origin:right center;">74%</span>
<span class="t" style="left:442.11px;top:439.95px;line-height:11.50px;font-family:'Liberation Sans','DejaVu Sans',sans-serif;font-size:10px;font-weight:700;color:#000;transform:scaleX(0.9258);transform-origin:right center;">445</span>
<span class="t" style="left:6.78px;top:168.76px;line-height:12.07px;font-family:'Liberation Sans','DejaVu Sans',sans-serif;font-size:10.5px;font-weight:400;color:#444;transform:scaleX(0.9412);transform-origin:center center;">1</span>
<span class="t" style="left:6.78px;top:183.76px;line-height:12.07px;font-family:'Liberation Sans','DejaVu Sans',sans-serif;font-size:10.5px;font-weight:400;color:#444;transform:scaleX(0.9412);transform-origin:center center;">2</span>
<span class="t" style="left:6.78px;top:198.76px;line-height:12.07px;font-family:'Liberation Sans','DejaVu Sans',sans-serif;font-size:10.5px;font-weight:400;color:#444;transform:scaleX(0.9412);transform-origin:center center;">3</span>
<span class="t" style="left:6.78px;top:213.76px;line-height:12.07px;font-family:'Liberation Sans','DejaVu Sans',sans-serif;font-size:10.5px;font-weight:400;color:#444;transform:scaleX(0.9412);transform-origin:center center;">4</span>
<span class="t" style="left:6.78px;top:228.76px;line-height:12.07px;font-family:'Liberation Sans','DejaVu Sans',sans-serif;font-size:10.5px;font-weight:400;color:#444;transform:scaleX(0.9412);transform-origin:center center;">5</span>
<span class="t" style="left:6.78px;top:243.76px;line-height:12.07px;font-family:'Liberation Sans','DejaVu Sans',sans-serif;font-size:10.5px;font-weight:400;color:#444;transform:scaleX(0.9412);transform-origin:center center;">6</span>
<span class="t" style="left:6.78px;top:258.76px;line-height:12.07px;font-family:'Liberation Sans','DejaVu Sans',sans-serif;font-size:10.5px;font-weight:400;color:#444;transform:scaleX(0.9412);transform-origin:center center;">7</span>
<span class="t" style="left:6.78px;top:273.76px;line-height:12.07px;font-family:'Liberation Sans','DejaVu Sans',sans-serif;font-size:10.5px;font-weight:400;color:#444;transform:scaleX(0.9412);transform-origin:center center;">8</span>
<span class="t" style="left:6.78px;top:288.76px;line-height:12.07px;font-family:'Liberation Sans','DejaVu Sans',sans-serif;font-size:10.5px;font-weight:400;color:#444;transform:scaleX(0.9412);transform-origin:center center;">9</span>
<span class="t" style="left:3.86px;top:303.76px;line-height:12.07px;font-family:'Liberation Sans','DejaVu Sans',sans-serif;font-size:10.5px;font-weight:400;color:#444;transform:scaleX(0.9412);transform-origin:center center;">10</span>
<span class="t" style="left:4.25px;top:318.76px;line-height:12.07px;font-family:'Liberation Sans','DejaVu Sans',sans-serif;font-size:10.5px;font-weight:400;color:#444;transform:scaleX(1.0086);transform-origin:center center;">11</span>
<span class="t" style="left:3.86px;top:333.76px;line-height:12.07px;font-family:'Liberation Sans','DejaVu Sans',sans-serif;font-size:10.5px;font-weight:400;color:#444;transform:scaleX(0.9412);transform-origin:center center;">12</span>
<span class="t" style="left:3.86px;top:348.76px;line-height:12.07px;font-family:'Liberation Sans','DejaVu Sans',sans-serif;font-size:10.5px;font-weight:400;color:#444;transform:scaleX(0.9412);transform-origin:center center;">13</span>
<span class="t" style="left:3.86px;top:363.76px;line-height:12.07px;font-family:'Liberation Sans','DejaVu Sans',sans-serif;font-size:10.5px;font-weight:400;color:#444;transform:scaleX(0.9412);transform-origin:center center;">14</span>
<span class="t" style="left:3.86px;top:378.76px;line-height:12.07px;font-family:'Liberation Sans','DejaVu Sans',sans-serif;font-size:10.5px;font-weight:400;color:#444;transform:scaleX(0.9412);transform-origin:center center;">15</span>
<span class="t" style="left:3.86px;top:393.76px;line-height:12.07px;font-family:'Liberation Sans','DejaVu Sans',sans-serif;font-size:10.5px;font-weight:400;color:#444;transform:scaleX(0.9412);transform-origin:center center;">16</span>
<span class="t" style="left:3.86px;top:408.76px;line-height:12.07px;font-family:'Liberation Sans','DejaVu Sans',sans-serif;font-size:10.5px;font-weight:400;color:#444;transform:scaleX(0.9412);transform-origin:center center;">17</span>
<span class="t" style="left:3.86px;top:423.76px;line-height:12.07px;font-family:'Liberation Sans','DejaVu Sans',sans-serif;font-size:10.5px;font-weight:400;color:#444;transform:scaleX(0.9412);transform-origin:center center;">18</span>
<span class="t" style="left:3.86px;top:438.76px;line-height:12.07px;font-family:'Liberation Sans','DejaVu Sans',sans-serif;font-size:10.5px;font-weight:400;color:#444;transform:scaleX(0.9412);transform-origin:center center;">19</span>
<span class="t" style="left:3.86px;top:453.76px;line-height:12.07px;font-family:'Liberation Sans','DejaVu Sans',sans-serif;font-size:10.5px;font-weight:400;color:#444;transform:scaleX(0.9412);transform-origin:center center;">20</span>
<span class="t" style="left:3.86px;top:468.76px;line-height:12.07px;font-family:'Liberation Sans','DejaVu Sans',sans-serif;font-size:10.5px;font-weight:400;color:#444;transform:scaleX(0.9412);transform-origin:center center;">21</span>
<span class="t" style="left:3.86px;top:483.76px;line-height:12.07px;font-family:'Liberation Sans','DejaVu Sans',sans-serif;font-size:10.5px;font-weight:400;color:#444;transform:scaleX(0.9412);transform-origin:center center;">22</span>
<span class="t" style="left:3.86px;top:498.76px;line-height:12.07px;font-family:'Liberation Sans','DejaVu Sans',sans-serif;font-size:10.5px;font-weight:400;color:#217346;transform:scaleX(0.9412);transform-origin:center center;">23</span>
<div class="abs" style="left:507px;top:496px;width:50px;height:14px;border:2px solid #217346;border-bottom:none"></div>
<div id="vscroll" class="abs"></div>
<div class="abs" style="left:1010.500px;top:153.500px;width:11.500px;height:11px;background:#fff;border:1px solid #bfbfbf"></div>
<svg width="6" height="4" style="left:1013.500px;top:157px"><path d="M0 3.500h5.600L2.800 .3z" fill="#444"/></svg>
<div class="abs" style="left:1010.500px;top:165px;width:11.500px;height:15px;background:#fff;border:1px solid #bfbfbf"></div>
<div class="abs" style="left:1010.500px;top:497px;width:11.500px;height:11px;background:#fff;border:1px solid #bfbfbf"></div>
<svg width="6" height="4" style="left:1013.500px;top:501px"><path d="M0 .3h5.600L2.800 3.500z" fill="#444"/></svg>
<!-- p_chart -->
<div class="abs" style="left:488px;top:170px;width:386px;height:216px;background:#fff;border:1px solid #d4d4d4"></div>
<div class="abs" style="left:496.3px;top:177px;width:84.4px;height:12px;background:linear-gradient(#ececec,#d3d3d3);border:1px solid #c9c9c9;"></div>
<div class="abs" style="left:583.0px;top:177px;width:73.0px;height:12px;background:linear-gradient(#ececec,#d3d3d3);border:1px solid #c9c9c9;"></div>
<div class="abs" style="left:658.0px;top:177px;width:68.6px;height:12px;background:linear-gradient(#ececec,#d3d3d3);border:1px solid #c9c9c9;"></div>
<div class="abs" style="left:728.4px;top:177px;width:57.6px;height:12px;background:linear-gradient(#ececec,#d3d3d3);border:1px solid #c9c9c9;"></div>
<span class="t" style="left:498.50px;top:178.02px;line-height:10.35px;font-family:'Liberation Sans','DejaVu Sans',sans-serif;font-size:9px;font-weight:400;color:#222;transform:scaleX(0.8767);transform-origin:left center;">Sum of</span>
<span class="t" style="left:525.00px;top:178.43px;line-height:8.74px;font-family:'Liberation Sans','DejaVu Sans',sans-serif;font-size:7.6px;font-weight:400;color:#222;transform:scale(1.0971,1.120);transform-origin:left center;">الكثافة السكانية</span>
<span class="t" style="left:585.50px;top:178.02px;line-height:10.35px;font-family:'Liberation Sans','DejaVu Sans',sans-serif;font-size:9px;font-weight:400;color:#222;transform:scaleX(0.8767);transform-origin:left center;">Sum of</span>
<span class="t" style="left:612.50px;top:178.43px;line-height:8.74px;font-family:'Liberation Sans','DejaVu Sans',sans-serif;font-size:7.6px;font-weight:400;color:#222;transform:scale(1.1193,1.120);transform-origin:left center;">المستهدفين</span>
<span class="t" style="left:660.00px;top:178.02px;line-height:10.35px;font-family:'Liberation Sans','DejaVu Sans',sans-serif;font-size:9px;font-weight:400;color:#222;transform:scaleX(0.9107);transform-origin:left center;">Average of</span>
<span class="t" style="left:700.00px;top:178.43px;line-height:8.74px;font-family:'Liberation Sans','DejaVu Sans',sans-serif;font-size:7.6px;font-weight:400;color:#222;transform:scale(1.0877,1.120);transform-origin:left center;">التغطية</span>
<span class="t" style="left:730.00px;top:178.02px;line-height:10.35px;font-family:'Liberation Sans','DejaVu Sans',sans-serif;font-size:9px;font-weight:400;color:#222;transform:scaleX(0.8669);transform-origin:left center;">Count of</span>
<span class="t" style="left:760.00px;top:178.43px;line-height:8.74px;font-family:'Liberation Sans','DejaVu Sans',sans-serif;font-size:7.6px;font-weight:400;color:#222;transform:scale(1.2425,1.120);transform-origin:left center;">التاريخ</span>
<svg width="1024" height="576" style="left:0;top:0" shape-rendering="crispEdges"><path d="M534.0 320.5H770.5" stroke="#d9d9d9" stroke-width="1"/><path d="M534.0 308.5H770.5" stroke="#d9d9d9" stroke-width="1"/><path d="M534.0 296.5H770.5" stroke="#d9d9d9" stroke-width="1"/><path d="M534.0 284.5H770.5" stroke="#d9d9d9" stroke-width="1"/><path d="M534.0 272.5H770.5" stroke="#d9d9d9" stroke-width="1"/><path d="M534.0 260.5H770.5" stroke="#d9d9d9" stroke-width="1"/><path d="M534.0 248.5H770.5" stroke="#d9d9d9" stroke-width="1"/><path d="M534.0 236.5H770.5" stroke="#d9d9d9" stroke-width="1"/><path d="M534.0 224.5H770.5" stroke="#d9d9d9" stroke-width="1"/><path d="M534.0 213.5H770.5" stroke="#d9d9d9" stroke-width="1"/><path d="M534.0 201.5H770.5" stroke="#d9d9d9" stroke-width="1"/></svg>
<svg width="1024" height="576" style="left:0;top:0"><rect x="535.80" y="264.47" width="2.300" height="55.53" fill="#3156a3"/><rect x="538.70" y="279.10" width="2.100" height="40.90" fill="#5b9bd5"/><rect x="549.71" y="282.84" width="2.300" height="37.16" fill="#3156a3"/><rect x="552.61" y="292.49" width="2.100" height="27.51" fill="#5b9bd5"/><rect x="563.62" y="278.73" width="2.300" height="41.27" fill="#3156a3"/><rect x="566.52" y="290.62" width="2.100" height="29.38" fill="#5b9bd5"/><rect x="577.54" y="216.83" width="2.300" height="103.17" fill="#3156a3"/><rect x="580.44" y="245.10" width="2.100" height="74.90" fill="#5b9bd5"/><rect x="591.45" y="296.72" width="2.300" height="23.28" fill="#3156a3"/><rect x="594.35" y="303.37" width="2.100" height="16.63" fill="#5b9bd5"/><rect x="605.36" y="300.00" width="2.300" height="20.00" fill="#3156a3"/><rect x="608.26" y="305.03" width="2.100" height="14.97" fill="#5b9bd5"/><rect x="619.27" y="294.94" width="2.300" height="25.06" fill="#3156a3"/><rect x="622.17" y="301.93" width="2.100" height="18.07" fill="#5b9bd5"/><rect x="633.18" y="252.37" width="2.300" height="67.63" fill="#3156a3"/><rect x="636.08" y="272.04" width="2.100" height="47.96" fill="#5b9bd5"/><rect x="647.09" y="283.47" width="2.300" height="36.53" fill="#3156a3"/><rect x="649.99" y="290.63" width="2.100" height="29.37" fill="#5b9bd5"/><rect x="661.01" y="273.72" width="2.300" height="46.28" fill="#3156a3"/><rect x="663.91" y="286.65" width="2.100" height="33.35" fill="#5b9bd5"/><rect x="674.92" y="291.38" width="2.300" height="28.62" fill="#3156a3"/><rect x="677.82" y="298.47" width="2.100" height="21.53" fill="#5b9bd5"/><rect x="688.83" y="280.78" width="2.300" height="39.22" fill="#3156a3"/><rect x="691.73" y="291.60" width="2.100" height="28.40" fill="#5b9bd5"/><rect x="702.74" y="308.11" width="2.300" height="11.89" fill="#3156a3"/><rect x="705.64" y="310.52" width="2.100" height="9.48" fill="#5b9bd5"/><rect x="716.65" y="295.02" width="2.300" height="24.98" fill="#3156a3"/><rect x="719.55" y="302.01" width="2.100" height="17.99" fill="#5b9bd5"/><rect x="730.56" y="298.87" width="2.300" height="21.13" fill="#3156a3"/><rect x="733.46" y="303.73" width="2.100" height="16.27" fill="#5b9bd5"/><rect x="744.48" y="264.18" width="2.300" height="55.82" fill="#3156a3"/><rect x="747.38" y="275.52" width="2.100" height="44.48" fill="#5b9bd5"/><rect x="758.39" y="294.95" width="2.300" height="25.05" fill="#3156a3"/><rect x="761.29" y="300.61" width="2.100" height="19.39" fill="#5b9bd5"/></svg>
<span class="t" style="left:520.48px;top:315.12px;line-height:10.35px;font-family:'Liberation Sans','DejaVu Sans',sans-serif;font-size:9px;font-weight:400;color:#505050;transform:scaleX(0.8872);transform-origin:right center;">0</span>
<span class="t" style="left:495.45px;top:303.25px;line-height:10.35px;font-family:'Liberation Sans','DejaVu Sans',sans-serif;font-size:9px;font-weight:400;color:#505050;transform:scaleX(0.8886);transform-origin:right center;">100000</span>
<span class="t" style="left:495.45px;top:291.37px;line-height:10.35px;font-family:'Liberation Sans','DejaVu Sans',sans-serif;font-size:9px;font-weight:400;color:#505050;transform:scaleX(0.8886);transform-origin:right center;">200000</span>
<span class="t" style="left:495.45px;top:279.49px;line-height:10.35px;font-family:'Liberation Sans','DejaVu Sans',sans-serif;font-size:9px;font-weight:400;color:#505050;transform:scaleX(0.8886);transform-origin:right center;">300000</span>
<span class="t" style="left:495.45px;top:267.61px;line-height:10.35px;font-family:'Liberation Sans','DejaVu Sans',sans-serif;font-size:9px;font-weight:400;color:#505050;transform:scaleX(0.8886);transform-origin:right center;">400000</span>
<span class="t" style="left:495.45px;top:255.73px;line-height:10.35px;font-family:'Liberation Sans','DejaVu Sans',sans-serif;font-size:9px;font-weight:400;color:#505050;transform:scaleX(0.8886);transform-origin:right center;">500000</span>
<span class="t" style="left:495.45px;top:243.84px;line-height:10.35px;font-family:'Liberation Sans','DejaVu Sans',sans-serif;font-size:9px;font-weight:400;color:#505050;transform:scaleX(0.8886);transform-origin:right center;">600000</span>
<span class="t" style="left:495.45px;top:231.96px;line-height:10.35px;font-family:'Liberation Sans','DejaVu Sans',sans-serif;font-size:9px;font-weight:400;color:#505050;transform:scaleX(0.8886);transform-origin:right center;">700000</span>
<span class="t" style="left:495.45px;top:220.08px;line-height:10.35px;font-family:'Liberation Sans','DejaVu Sans',sans-serif;font-size:9px;font-weight:400;color:#505050;transform:scaleX(0.8886);transform-origin:right center;">800000</span>
<span class="t" style="left:495.45px;top:208.20px;line-height:10.35px;font-family:'Liberation Sans','DejaVu Sans',sans-serif;font-size:9px;font-weight:400;color:#505050;transform:scaleX(0.8886);transform-origin:right center;">900000</span>
<span class="t" style="left:490.45px;top:196.32px;line-height:10.35px;font-family:'Liberation Sans','DejaVu Sans',sans-serif;font-size:9px;font-weight:400;color:#505050;transform:scaleX(0.8888);transform-origin:right center;">1000000</span>
<span class="t" style="right:489.8px;top:326px;font-size:7px;color:#505050;transform-origin:100% 0;transform:rotate(-90deg);line-height:9px">أربيل</span>
<span class="t" style="right:475.9px;top:326px;font-size:7px;color:#505050;transform-origin:100% 0;transform:rotate(-90deg);line-height:9px">الأنبار</span>
<span class="t" style="right:462.0px;top:326px;font-size:7px;color:#505050;transform-origin:100% 0;transform:rotate(-90deg);line-height:9px">البصرة</span>
<span class="t" style="right:448.1px;top:326px;font-size:7px;color:#505050;transform-origin:100% 0;transform:rotate(-90deg);line-height:9px">السليمانية</span>
<span class="t" style="right:434.2px;top:326px;font-size:7px;color:#505050;transform-origin:100% 0;transform:rotate(-90deg);line-height:9px">القادسية</span>
<span class="t" style="right:420.3px;top:326px;font-size:7px;color:#505050;transform-origin:100% 0;transform:rotate(-90deg);line-height:9px">النجف</span>
<span class="t" style="right:406.4px;top:326px;font-size:7px;color:#505050;transform-origin:100% 0;transform:rotate(-90deg);line-height:9px">بابل</span>
<span class="t" style="right:392.5px;top:326px;font-size:7px;color:#505050;transform-origin:100% 0;transform:rotate(-90deg);line-height:9px">بغداد</span>
<span class="t" style="right:378.6px;top:326px;font-size:7px;color:#505050;transform-origin:100% 0;transform:rotate(-90deg);line-height:9px">دهوك</span>
<span class="t" style="right:364.6px;top:326px;font-size:7px;color:#505050;transform-origin:100% 0;transform:rotate(-90deg);line-height:9px">ديالى</span>
<span class="t" style="right:350.7px;top:326px;font-size:7px;color:#505050;transform-origin:100% 0;transform:rotate(-90deg);line-height:9px">ذي قار</span>
<span class="t" style="right:336.8px;top:326px;font-size:7px;color:#505050;transform-origin:100% 0;transform:rotate(-90deg);line-height:9px">صلاح الدين</span>
<span class="t" style="right:322.9px;top:326px;font-size:7px;color:#505050;transform-origin:100% 0;transform:rotate(-90deg);line-height:9px">كربلاء</span>
<span class="t" style="right:309.0px;top:326px;font-size:7px;color:#505050;transform-origin:100% 0;transform:rotate(-90deg);line-height:9px">كركوك</span>
<span class="t" style="right:295.1px;top:326px;font-size:7px;color:#505050;transform-origin:100% 0;transform:rotate(-90deg);line-height:9px">ميسان</span>
<span class="t" style="right:281.2px;top:326px;font-size:7px;color:#505050;transform-origin:100% 0;transform:rotate(-90deg);line-height:9px">نينوى</span>
<span class="t" style="right:267.3px;top:326px;font-size:7px;color:#505050;transform-origin:100% 0;transform:rotate(-90deg);line-height:9px">واسط</span>
<div class="abs" style="left:782px;top:238px;width:85px;height:12.500px;background:linear-gradient(#ececec,#d3d3d3);border:1px solid #c9c9c9;"></div>
<span class="t" style="left:785.00px;top:239.32px;line-height:10.35px;font-family:'Liberation Sans','DejaVu Sans',sans-serif;font-size:9px;font-weight:400;color:#222;transform:scaleX(0.9308);transform-origin:left center;">Values</span>
<div class="abs" style="left:785.500px;top:258.2px;width:4px;height:4px;background:#3156a3"></div>
<span class="t" style="left:793.40px;top:254.52px;line-height:10.35px;font-family:'Liberation Sans','DejaVu Sans',sans-serif;font-size:9px;font-weight:400;color:#505050;transform:scaleX(0.8767);transform-origin:left center;">Sum of</span>
<span class="t" style="left:820.60px;top:254.87px;line-height:8.05px;font-family:'Liberation Sans','DejaVu Sans',sans-serif;font-size:7px;font-weight:400;color:#505050;transform:scale(0.9146,1.100);transform-origin:left center;">الكثافة السكانية</span>
<div class="abs" style="left:785.500px;top:275.0px;width:4px;height:4px;background:#5b9bd5"></div>
<span class="t" style="left:793.40px;top:271.32px;line-height:10.35px;font-family:'Liberation Sans','DejaVu Sans',sans-serif;font-size:9px;font-weight:400;color:#505050;transform:scaleX(0.8767);transform-origin:left center;">Sum of</span>
<span class="t" style="left:820.60px;top:271.68px;line-height:8.05px;font-family:'Liberation Sans','DejaVu Sans',sans-serif;font-size:7px;font-weight:400;color:#505050;transform:scale(0.8867,1.100);transform-origin:left center;">المستهدفين</span>
<div class="abs" style="left:785.500px;top:291.7px;width:4px;height:4px;background:#2e86d6"></div>
<span class="t" style="left:793.40px;top:288.02px;line-height:10.35px;font-family:'Liberation Sans','DejaVu Sans',sans-serif;font-size:9px;font-weight:400;color:#505050;transform:scaleX(0.9061);transform-origin:left center;">Average of</span>
<span class="t" style="left:834.90px;top:288.38px;line-height:8.05px;font-family:'Liberation Sans','DejaVu Sans',sans-serif;font-size:7px;font-weight:400;color:#505050;transform:scale(0.9581,1.100);transform-origin:left center;">التغطية</span>
<div class="abs" style="left:785.500px;top:308.5px;width:4px;height:4px;background:#7d8fb8"></div>
<span class="t" style="left:793.40px;top:304.82px;line-height:10.35px;font-family:'Liberation Sans','DejaVu Sans',sans-serif;font-size:9px;font-weight:400;color:#505050;transform:scaleX(0.9168);transform-origin:left center;">Count of</span>
<span class="t" style="left:826.80px;top:305.18px;line-height:8.05px;font-family:'Liberation Sans','DejaVu Sans',sans-serif;font-size:7px;font-weight:400;color:#505050;transform:scale(1.1006,1.100);transform-origin:left center;">التاريخ</span>
<div class="abs" style="left:495.700px;top:367px;width:46.500px;height:12.500px;background:linear-gradient(#ececec,#d3d3d3);border:1px solid #c9c9c9;"></div>
<div class="abs" style="left:543px;top:367px;width:42px;height:12.500px;background:linear-gradient(#ececec,#d3d3d3);border:1px solid #c9c9c9;"></div>
<svg width="6" height="4" style="left:501.200px;top:372px"><path d="M0 0h5.600L2.800 3.200z" fill="#333"/></svg>
<svg width="6" height="4" style="left:548px;top:372px"><path d="M0 0h5.600L2.800 3.200z" fill="#333"/></svg>
<span class="t" style="left:516.80px;top:368.11px;line-height:9.77px;font-family:'Liberation Sans','DejaVu Sans',sans-serif;font-size:8.5px;font-weight:400;color:#222;transform:scaleX(1.0145);transform-origin:left center;" dir="rtl">المحا..</span>
<span class="t" style="left:559.60px;top:368.11px;line-height:9.77px;font-family:'Liberation Sans','DejaVu Sans',sans-serif;font-size:8.5px;font-weight:400;color:#222;transform:scaleX(0.8916);transform-origin:left center;" dir="rtl">المنط..</span>
<div class="abs" style="left:842px;top:367px;width:11px;height:12.500px;background:linear-gradient(#ececec,#d3d3d3);border:1px solid #c9c9c9;"></div>
<div class="abs" style="left:854px;top:367px;width:11px;height:12.500px;background:linear-gradient(#ececec,#d3d3d3);border:1px solid #c9c9c9;"></div>
<svg width="24" height="8" style="left:842px;top:369.500px" stroke="#8a8a8a" stroke-width="1.300"><path d="M2.500 4h6M5.500 1v6M14.500 4h6"/></svg>
<!-- p_slicers -->
<div class="abs" style="left:935px;top:184px;width:73px;height:64px;background:#fff;border:1px solid #8ea4d2;border-right:none"></div>
<div class="abs" style="left:941px;top:203.700px;width:67px;height:1.500px;background:#7f96c8"></div>
<span class="t" style="left:942.00px;top:188.37px;line-height:11.27px;font-family:'Liberation Sans','DejaVu Sans',sans-serif;font-size:9.8px;font-weight:700;color:#111;transform:scale(0.8103,1.200);transform-origin:left center;">الفريق</span>
<div class="abs" style="left:942px;top:208.500px;width:63px;height:18px;background:linear-gradient(#bcc7e5,#adbadc);border:1px solid #9aa6c9;border-radius:2.500px;"></div>
<span class="t" style="left:948.00px;top:211.65px;line-height:10.70px;font-family:'Liberation Sans','DejaVu Sans',sans-serif;font-size:9.3px;font-weight:400;color:#111;transform:scale(0.9511,1.200);transform-origin:left center;">الفريق الاول</span>
<div class="abs" style="left:875px;top:258px;width:133px;height:80px;background:#fff;border:1px solid #8ea4d2;border-right:none"></div>
<div class="abs" style="left:881px;top:277.500px;width:127px;height:1.500px;background:#7f96c8"></div>
<span class="t" style="left:882.00px;top:262.37px;line-height:11.27px;font-family:'Liberation Sans','DejaVu Sans',sans-serif;font-size:9.8px;font-weight:700;color:#111;transform:scale(0.8011,1.200);transform-origin:left center;">نوع السلة</span>
<div class="abs" style="left:881.5px;top:282.8px;width:50.5px;height:17.7px;background:linear-gradient(#bcc7e5,#adbadc);border:1px solid #9aa6c9;border-radius:2.500px;"></div>
<div class="abs" style="left:935.0px;top:282.8px;width:50.5px;height:17.7px;background:linear-gradient(#bcc7e5,#adbadc);border:1px solid #9aa6c9;border-radius:2.500px;"></div>
<div class="abs" style="left:988.500px;top:282.800px;width:19.500px;height:17.700px;background:linear-gradient(#bcc7e5,#adbadc);border:1px solid #9aa6c9;border-radius:2.500px;border-right:none;border-radius:2px 0 0 2px"></div>
<span class="t" style="left:888.50px;top:286.05px;line-height:11.50px;font-family:'Liberation Sans','DejaVu Sans',sans-serif;font-size:10px;font-weight:700;color:#222;transform:scaleX(0.9462);transform-origin:left center;">Type A</span>
<span class="t" style="left:942.00px;top:286.05px;line-height:11.50px;font-family:'Liberation Sans','DejaVu Sans',sans-serif;font-size:10px;font-weight:700;color:#222;transform:scaleX(0.9353);transform-origin:left center;">Type B</span>
<div class="abs" style="left:995px;top:284px;width:13px;height:16px;overflow:hidden"><span class="t" style="left:0.50px;top:2.05px;line-height:11.50px;font-family:'Liberation Sans','DejaVu Sans',sans-serif;font-size:10px;font-weight:700;color:#222;transform:scaleX(0.9353);transform-origin:left center;">Type C</span></div>
<div class="abs" style="left:747px;top:397px;width:144.500px;height:112px;background:#fff;border:1px solid #8ea4d2;border-bottom:none"></div>
<div class="abs" style="left:754px;top:416.500px;width:132px;height:1.500px;background:#7f96c8"></div>
<span class="t" style="left:754.50px;top:401.37px;line-height:11.27px;font-family:'Liberation Sans','DejaVu Sans',sans-serif;font-size:9.8px;font-weight:700;color:#111;transform:scale(0.7892,1.200);transform-origin:left center;">المحافظة</span>
<svg width="12" height="10" style="left:847.5px;top:401.5px" fill="none" stroke="#666" stroke-width=".9"><path d="M4.500 1.500h7M4.500 5h7M4.500 8.500h7"/><path d="M.3 1.500l1 1 1.500-2M.3 5l1 1 1.500-2M.3 8.500l1 1 1.500-2" stroke-width=".8"/></svg>
<div class="abs" style="left:754.0px;top:420.6px;width:55.6px;height:18.2px;background:linear-gradient(#bcc7e5,#adbadc);border:1px solid #9aa6c9;border-radius:2.500px;"></div>
<div class="abs" style="left:812.0px;top:420.6px;width:54.8px;height:18.2px;background:linear-gradient(#bcc7e5,#adbadc);border:1px solid #9aa6c9;border-radius:2.500px;"></div>
<span class="t" style="left:761.50px;top:424.05px;line-height:10.70px;font-family:'Liberation Sans','DejaVu Sans',sans-serif;font-size:9.3px;font-weight:400;color:#111;transform:scale(0.8711,1.200);transform-origin:left center;">أربيل</span>
<span class="t" style="left:819.00px;top:424.05px;line-height:10.70px;font-family:'Liberation Sans','DejaVu Sans',sans-serif;font-size:9.3px;font-weight:400;color:#111;transform:scale(1.0190,1.200);transform-origin:left center;">الأنبار</span>
<div class="abs" style="left:754.0px;top:441.8px;width:55.6px;height:18.2px;background:linear-gradient(#bcc7e5,#adbadc);border:1px solid #9aa6c9;border-radius:2.500px;"></div>
<div class="abs" style="left:812.0px;top:441.8px;width:54.8px;height:18.2px;background:linear-gradient(#fbdb72,#fdf2c6);border:1px solid #dcc77a;border-radius:2.500px;"></div>
<span class="t" style="left:761.50px;top:445.25px;line-height:10.70px;font-family:'Liberation Sans','DejaVu Sans',sans-serif;font-size:9.3px;font-weight:400;color:#111;transform:scale(0.8366,1.200);transform-origin:left center;">البصرة</span>
<span class="t" style="left:819.00px;top:445.25px;line-height:10.70px;font-family:'Liberation Sans','DejaVu Sans',sans-serif;font-size:9.3px;font-weight:400;color:#111;transform:scale(0.9820,1.200);transform-origin:left center;">السليمانية</span>
<div class="abs" style="left:754.0px;top:463.0px;width:55.6px;height:18.2px;background:linear-gradient(#bcc7e5,#adbadc);border:1px solid #9aa6c9;border-radius:2.500px;"></div>
<div class="abs" style="left:812.0px;top:463.0px;width:54.8px;height:18.2px;background:linear-gradient(#bcc7e5,#adbadc);border:1px solid #9aa6c9;border-radius:2.500px;"></div>
<span class="t" style="left:761.50px;top:466.45px;line-height:10.70px;font-family:'Liberation Sans','DejaVu Sans',sans-serif;font-size:9.3px;font-weight:400;color:#111;transform:scale(0.9488,1.200);transform-origin:left center;">القادسية</span>
<span class="t" style="left:819.00px;top:466.45px;line-height:10.70px;font-family:'Liberation Sans','DejaVu Sans',sans-serif;font-size:9.3px;font-weight:400;color:#111;transform:scale(0.9011,1.200);transform-origin:left center;">النجف</span>
<div class="abs" style="left:754.0px;top:484.2px;width:55.6px;height:18.2px;background:linear-gradient(#bcc7e5,#adbadc);border:1px solid #9aa6c9;border-radius:2.500px;"></div>
<div class="abs" style="left:812.0px;top:484.2px;width:54.8px;height:18.2px;background:linear-gradient(#bcc7e5,#adbadc);border:1px solid #9aa6c9;border-radius:2.500px;"></div>
<span class="t" style="left:761.50px;top:487.65px;line-height:10.70px;font-family:'Liberation Sans','DejaVu Sans',sans-serif;font-size:9.3px;font-weight:400;color:#111;transform:scale(0.9627,1.200);transform-origin:left center;">بابل</span>
<span class="t" style="left:819.00px;top:487.65px;line-height:10.70px;font-family:'Liberation Sans','DejaVu Sans',sans-serif;font-size:9.3px;font-weight:400;color:#111;transform:scale(1.1237,1.200);transform-origin:left center;">بغداد</span>
<div class="abs" style="left:754px;top:505.4px;width:55.600px;height:6px;background:linear-gradient(#bcc7e5,#adbadc);border:1px solid #9aa6c9;border-radius:2.500px;border-bottom:none"></div>
<div class="abs" style="left:812px;top:505.4px;width:54.800px;height:6px;background:linear-gradient(#bcc7e5,#adbadc);border:1px solid #9aa6c9;border-radius:2.500px;border-bottom:none"></div>
<div class="abs" style="left:872px;top:420px;width:12.500px;height:89px;background:#f0f0f0"></div>
<div class="abs" style="left:872px;top:433.500px;width:12.500px;height:75.500px;background:#c8c8c8"></div>
<div class="abs" style="left:863px;top:347px;width:144px;height:84.500px;background:#fff;border:1px solid #8ea4d2"></div>
<div class="abs" style="left:869.500px;top:367.300px;width:131px;height:1.500px;background:#7f96c8"></div>
<span class="t" style="left:870.00px;top:351.87px;line-height:11.27px;font-family:'Liberation Sans','DejaVu Sans',sans-serif;font-size:9.8px;font-weight:700;color:#111;transform:scale(0.7953,1.200);transform-origin:left center;">التقسيم الاتجاهي</span>
<svg width="12" height="10" style="left:962.5px;top:352.0px" fill="none" stroke="#666" stroke-width=".9"><path d="M4.500 1.500h7M4.500 5h7M4.500 8.500h7"/><path d="M.3 1.500l1 1 1.500-2M.3 5l1 1 1.500-2M.3 8.500l1 1 1.500-2" stroke-width=".8"/></svg>
<svg width="12" height="11" style="left:986px;top:351.500px"><path d="M.5 .5h9L6 4.500v4.500L4 7.500v-3z" fill="#c4c4c4"/><path d="M7 6.500l4 4M11 6.500l-4 4" stroke="#c4c4c4" stroke-width="1.100"/></svg>
<div class="abs" style="left:869.6px;top:371.2px;width:41.4px;height:18.3px;background:linear-gradient(#bcc7e5,#adbadc);border:1px solid #9aa6c9;border-radius:2.500px;"></div>
<span class="t" style="left:877.10px;top:374.70px;line-height:10.70px;font-family:'Liberation Sans','DejaVu Sans',sans-serif;font-size:9.3px;font-weight:400;color:#111;transform:scale(0.9492,1.200);transform-origin:left center;">جنوبي</span>
<div class="abs" style="left:914.0px;top:371.2px;width:42.0px;height:18.3px;background:linear-gradient(#bcc7e5,#adbadc);border:1px solid #9aa6c9;border-radius:2.500px;"></div>
<span class="t" style="left:921.50px;top:374.70px;line-height:10.70px;font-family:'Liberation Sans','DejaVu Sans',sans-serif;font-size:9.3px;font-weight:400;color:#111;transform:scale(0.7562,1.200);transform-origin:left center;">شرقي</span>
<div class="abs" style="left:958.3px;top:371.2px;width:41.9px;height:18.3px;background:linear-gradient(#bcc7e5,#adbadc);border:1px solid #9aa6c9;border-radius:2.500px;"></div>
<span class="t" style="left:965.80px;top:374.70px;line-height:10.70px;font-family:'Liberation Sans','DejaVu Sans',sans-serif;font-size:9.3px;font-weight:400;color:#111;transform:scale(0.8273,1.200);transform-origin:left center;">شمالي</span>
<div class="abs" style="left:869.6px;top:392.5px;width:41.4px;height:18.3px;background:linear-gradient(#bcc7e5,#adbadc);border:1px solid #9aa6c9;border-radius:2.500px;"></div>
<span class="t" style="left:877.10px;top:396.00px;line-height:10.70px;font-family:'Liberation Sans','DejaVu Sans',sans-serif;font-size:9.3px;font-weight:400;color:#111;transform:scale(0.9101,1.200);transform-origin:left center;">غربي</span>
<div class="abs" style="left:914.0px;top:392.5px;width:42.0px;height:18.3px;background:linear-gradient(#bcc7e5,#adbadc);border:1px solid #9aa6c9;border-radius:2.500px;"></div>
<span class="t" style="left:921.50px;top:396.00px;line-height:10.70px;font-family:'Liberation Sans','DejaVu Sans',sans-serif;font-size:9.3px;font-weight:400;color:#111;transform:scale(0.7955,1.200);transform-origin:left center;">وسطي</span>
<!-- p_bottom -->
<div id="tabs" class="abs"></div>
<div class="abs" style="left:0;top:508.500px;width:1024px;height:1px;background:#c8c8c8"></div>
<svg width="30" height="8" style="left:19px;top:514.500px" fill="#bdbdbd"><path d="M4.500 0v7L1 3.500z"/><path d="M23.500 0v7L27 3.500z"/></svg>
<div class="abs" style="left:75px;top:512px;width:1px;height:15px;background:#bdbdbd"></div>
<span class="t" style="left:85.00px;top:512.66px;line-height:12.07px;font-family:'Liberation Sans','DejaVu Sans',sans-serif;font-size:10.5px;font-weight:400;color:#444;transform:scaleX(0.8563);transform-origin:left center;">Sheet5</span>
<div class="abs" style="left:124.500px;top:509px;width:76px;height:19px;background:#fff;border-bottom:2px solid #217346;border-left:1px solid #cfcfcf;border-right:1px solid #cfcfcf"></div>
<span class="t" style="left:133.20px;top:514.03px;line-height:10.35px;font-family:'Liberation Sans','DejaVu Sans',sans-serif;font-size:9px;font-weight:700;color:#1e7145;transform:scale(0.9051,1.150);transform-origin:left center;">ملخص التحليل</span>
<div class="abs" style="left:202px;top:511.300px;width:67.500px;height:15.500px;background:#1b2350"></div>
<span class="t" style="left:208.30px;top:514.12px;line-height:10.35px;font-family:'Liberation Sans','DejaVu Sans',sans-serif;font-size:9px;font-weight:400;color:#fff;transform:scale(1.0489,1.150);transform-origin:left center;">مناطق العراق</span>
<div class="abs" style="left:271.500px;top:512px;width:1px;height:15px;background:#bdbdbd"></div>
<svg width="13" height="13" style="left:295.500px;top:512.500px" fill="none" stroke="#6a6a6a"><circle cx="6.500" cy="6.500" r="5.500" stroke-width="1"/><path d="M3.500 6.500h6M6.500 3.500v6" stroke-width="1.300"/></svg>
<svg width="2" height="10" style="left:614.300px;top:514.500px" fill="#a0a0a0"><rect width="1.200" height="1.200"/><rect y="3.500" width="1.200" height="1.200"/><rect y="7" width="1.200" height="1.200"/></svg>
<div class="abs" style="left:626.500px;top:514px;width:382px;height:11px;background:#f0f0f0"></div>
<div class="abs" style="left:626.500px;top:514px;width:11.500px;height:11px;background:#fff;border:1px solid #bfbfbf"></div>
<svg width="4" height="6" style="left:630px;top:516.500px"><path d="M3.500 0v5.600L.3 2.800z" fill="#222"/></svg>
<div class="abs" style="left:638px;top:514px;width:306.500px;height:11px;background:#fff;border:1px solid #bfbfbf"></div>
<div class="abs" style="left:997px;top:514px;width:11.500px;height:11px;background:#fff;border:1px solid #bfbfbf"></div>
<svg width="4" height="6" style="left:1001px;top:516.500px"><path d="M.3 0v5.600L3.500 2.800z" fill="#222"/></svg>
<div id="status" class="abs"></div>
<span class="t" style="left:8.40px;top:532.55px;line-height:11.50px;font-family:'Liberation Sans','DejaVu Sans',sans-serif;font-size:10px;font-weight:400;color:#3b3b3b;transform:scaleX(0.8061);transform-origin:left center;">Ready</span>
<svg width="13" height="12" style="left:45px;top:532px" fill="none" stroke="#444" stroke-width="1"><path d="M7.500 1.300A4.800 4.800 0 1 0 9.500 9"/><path d="M5 3v2.500M3.500 4.300h3" stroke-width=".8"/><path d="M7 6l4.500 4.500M11.500 6L7 10.500" stroke-width="1.200"/><path d="M9 2.500l1.500 1.500 2-2.500" stroke-width=".8"/></svg>
<span class="t" style="left:60.00px;top:532.84px;line-height:10.92px;font-family:'Liberation Sans','DejaVu Sans',sans-serif;font-size:9.5px;font-weight:700;color:#3b3b3b;transform:scaleX(0.8280);transform-origin:left center;">Accessibility: Investigate</span>
<div class="abs" style="left:799px;top:529.500px;width:30px;height:16.500px;background:#d2d2d2"></div>
<svg width="80" height="12" style="left:808px;top:531.500px" fill="none" stroke="#6a6a6a" stroke-width="1"><rect x="1.500" y="1.500" width="9" height="9"/><path d="M1.500 4.500h9M1.500 7.500h9M4.500 1.500v9M7.500 1.500v9"/><rect x="31.500" y="1.500" width="9" height="9"/><rect x="34" y="3.500" width="4" height="5"/><rect x="61.500" y="1.500" width="9" height="9"/><path d="M64.500 1.500v5h3.500v-5"/></svg>
<svg width="100" height="12" style="left:892px;top:531.500px" fill="none" stroke="#555" stroke-width="1"><path d="M1.500 6h5"/><path d="M11.500 6h75" stroke="#8a8a8a"/><path d="M90 6h6M93 3v6"/><rect x="48" y="1.500" width="2" height="9" fill="#444" stroke="#444"/></svg>
<span class="t" style="left:998.00px;top:532.84px;line-height:10.92px;font-family:'Liberation Sans','DejaVu Sans',sans-serif;font-size:9.5px;font-weight:400;color:#3b3b3b;transform:scaleX(0.8021);transform-origin:left center;">100%</span>
<!-- p_task -->
<div id="task" class="abs"></div>
<svg width="13" height="13" style="left:12px;top:554.500px" fill="#fff"><path d="M0 1.800l5.300-.75v5H0zM6 .95L12.700 0v6.050H6zM0 6.800h5.300v5L0 11.050zM6 6.800h6.700v6L6 11.900z"/></svg>
<div class="abs" style="left:36.300px;top:546px;width:215.200px;height:30px;background:#f2f2f2;border-top:1px solid #d4d4d4"></div>
<svg width="12" height="12" style="left:45.500px;top:555px" fill="none" stroke="#333" stroke-width="1.200"><circle cx="7" cy="4.600" r="3.700"/><path d="M4.300 7.400L.6 11.200"/></svg>
<span class="t" style="left:66.50px;top:554.40px;line-height:13.80px;font-family:'Liberation Sans','DejaVu Sans',sans-serif;font-size:12px;font-weight:400;color:#3f3f3f;transform:scaleX(0.8976);transform-origin:left center;">Type here to search</span>
<svg width="64" height="32" style="left:192px;top:544px"><path d="M5.300 25.300h48v1.800h-48z" fill="#f0b862"/><path d="M10 26.800h43v1.600h-43z" fill="#a98a62"/><path d="M23 23l-.6-7M24.500 23l.8-6M22 23.500l-1-3.500M49.500 23l-.5-5.500M51.500 23l.3-7.500M48 23.500l-1-3" stroke="#dcc49a" stroke-width=".9" fill="none"/><path d="M22 24.500l1-2.500 1 2 1-2.200 1.200 2.700z" fill="#3f9d62"/><path d="M47 24.800l1.200-3 1.200 2.200 1.300-3 1.300 3.800z" fill="#3f9d62"/><path d="M40.500 16l-2.200 10.500h-2.500M43 16l2 10.500h1.800" stroke="#5e5e60" stroke-width="1.100" fill="none"/><path d="M33.500 10.500c-2.500 3-5.500 3-7-1.500-.6-2-1.300-3.300-2.500-3.700" stroke="#9c9890" stroke-width="1.900" fill="none" stroke-linecap="round"/><circle cx="23.300" cy="7" r="1.500" fill="#6d6f74"/><path d="M22.300 8l-2 3.200" stroke="#8a8578" stroke-width="1" stroke-linecap="round"/><ellipse cx="41.300" cy="10.300" rx="8.800" ry="5.800" fill="#c9b188"/><g fill="#8a6f4a"><circle cx="37" cy="8" r=".7"/><circle cx="40" cy="6.500" r=".6"/><circle cx="43.500" cy="7.500" r=".7"/><circle cx="46.500" cy="9" r=".6"/><circle cx="38.500" cy="11" r=".7"/><circle cx="42" cy="10.500" r=".6"/><circle cx="45" cy="12.500" r=".7"/><circle cx="40.500" cy="13.500" r=".6"/><circle cx="35.500" cy="10.500" r=".6"/><circle cx="47.500" cy="6.500" r=".6"/><circle cx="44" cy="14.500" r=".6"/></g><g fill="#e5d3ae"><circle cx="38.500" cy="6.800" r=".6"/><circle cx="42" cy="8.500" r=".6"/><circle cx="45" cy="10.500" r=".6"/><circle cx="37" cy="12.800" r=".6"/><circle cx="41.500" cy="12" r=".5"/></g><path d="M12 22.500v3.500M14 22.500v3.500" stroke="#6a6a6c" stroke-width=".9"/><path d="M15.500 19c1.200-1.500 1.600-3 2-4.500" stroke="#9c9890" stroke-width="1.400" fill="none" stroke-linecap="round"/><circle cx="18" cy="14.300" r="1.200" fill="#6d6f74"/><path d="M18.800 13.600l1.300-1" stroke="#8a8578" stroke-width=".8"/><ellipse cx="13" cy="20.600" rx="3.900" ry="2.900" fill="#c4a87c"/><g fill="#8a6f4a"><circle cx="11.500" cy="19.800" r=".6"/><circle cx="14" cy="21" r=".6"/><circle cx="12.500" cy="22" r=".5"/><circle cx="15" cy="19.500" r=".5"/></g></svg>
<svg width="14" height="13" style="left:263.500px;top:554.500px" fill="none" stroke="#fff" stroke-width="1.100"><rect x="2" y="3.500" width="8" height="6"/><path d="M2 .8h8M2 12.200h8"/><path d="M12.500 3.500v2M12.500 7.500v2" stroke-width="1.300"/></svg>
<div class="abs" style="left:299.500px;top:553px;width:16.500px;height:15px;background:#0c1d45;border-radius:2.500px"></div>
<span class="t" style="left:302.00px;top:555.54px;line-height:10.92px;font-family:'Liberation Sans','DejaVu Sans',sans-serif;font-size:9.5px;font-weight:700;color:#35a9ff;transform:scaleX(0.9892);transform-origin:left center;">Ps</span>
<svg width="19" height="18" style="left:335px;top:552px"><path d="M13.500 0L19 2.500v13L13.500 18 4 9.500 1.500 11.500 0 10.500v-3L1.500 6.500 4 8.500z" fill="#2b8ee0"/><path d="M13.500 5v8L8 9z" fill="#1f201c"/><path d="M13.500 0L19 2.500v13L13.500 18z" fill="#3fa5f3"/></svg>
<svg width="17" height="17" style="left:373px;top:552px"><circle cx="8.500" cy="8.500" r="8.200" fill="#2da5e0"/><path d="M3.500 8.300l9-3.600c.5-.2.800.1.700.7l-1.500 7c-.1.500-.5.600-.9.400L8.500 11l-1.200 1.200c-.2.200-.4.100-.4-.2l.2-2 4-3.700-5 3.100L4 8.900c-.5-.2-.5-.4-.5-.6z" fill="#fff"/></svg>
<svg width="19" height="19" style="left:409px;top:551px"><circle cx="9.500" cy="9.500" r="9.200" fill="#e33b2e"/><path d="M9.500 9.500L1.500 5a9.200 9.200 0 0 0 4 13z" fill="#2ba24c"/><path d="M9.500 9.500L5.500 18a9.200 9.200 0 0 0 13-10z" fill="#fbc116"/><path d="M9.500 9.500h9A9.200 9.200 0 0 0 1.500 5z" fill="#e33b2e"/><circle cx="9.500" cy="9.500" r="4.300" fill="#fff"/><circle cx="9.500" cy="9.500" r="3.300" fill="#3f86f5"/></svg>
<svg width="26" height="20" style="left:445px;top:551px"><path d="M9.500 1.200a7.800 7.800 0 0 0-6.700 11.900L1.500 17.200l4.300-1.200A7.800 7.800 0 1 0 9.500 1.200z" fill="none" stroke="#2bd366" stroke-width="1.700"/><path d="M6.500 5.500c-.6.800-.6 2.300.8 4s3.300 2.600 4.300 2.200c.8-.3 1-1 .8-1.300l-1.500-.8-.8.700c-.8-.3-1.900-1.400-2.300-2.300l.7-.8-.7-1.600c-.4-.3-.9-.3-1.300-.1z" fill="#2bd366"/><circle cx="19.500" cy="14.500" r="4.800" fill="#2a2a2a" stroke="#d8d8d8" stroke-width=".9"/></svg>
<span class="t" style="left:461.30px;top:561.68px;line-height:8.05px;font-family:'Liberation Sans','DejaVu Sans',sans-serif;font-size:7px;font-weight:700;color:#fff;transform:scaleX(0.8776);transform-origin:left center;">11</span>
<svg width="20" height="17" style="left:481.500px;top:552.500px"><rect x="6" y="0" width="13.500" height="17" rx="1" fill="#2b7cd3"/><rect x="6" y="0" width="13.500" height="4.300" fill="#41a5ee"/><rect x="6" y="8.600" width="13.500" height="4.300" fill="#185abd"/><rect x="6" y="12.800" width="13.500" height="4.200" fill="#103f91"/><rect x="0" y="3.500" width="11" height="10.500" rx="1" fill="#185abd"/></svg>
<span class="t" style="left:483.30px;top:556.90px;line-height:9.20px;font-family:'Liberation Sans','DejaVu Sans',sans-serif;font-size:8px;font-weight:700;color:#fff;transform:scaleX(0.9917);transform-origin:left center;">W</span>
<div class="abs" style="left:510.500px;top:546.500px;width:36.500px;height:29.500px;background:#3e3f3b"></div>
<svg width="21" height="17" style="left:517.500px;top:552.500px"><rect x="6" y="0" width="14.500" height="17" rx="1" fill="#21a366"/><rect x="6" y="0" width="7.300" height="5.700" fill="#21a366"/><rect x="13.300" y="0" width="7.200" height="5.700" fill="#33c481"/><rect x="6" y="5.700" width="7.300" height="5.700" fill="#107c41"/><rect x="13.300" y="5.700" width="7.200" height="5.700" fill="#21a366"/><rect x="6" y="11.300" width="14.500" height="5.700" fill="#185c37"/><rect x="0" y="3.500" width="11" height="10.500" rx="1" fill="#107c41"/></svg>
<span class="t" style="left:520.00px;top:556.90px;line-height:9.20px;font-family:'Liberation Sans','DejaVu Sans',sans-serif;font-size:8px;font-weight:700;color:#fff;transform:scaleX(1.1228);transform-origin:left center;">X</span>
<svg width="19" height="19" style="left:556.500px;top:551px"><circle cx="9.500" cy="9.500" r="9.200" fill="#1b74c9"/><path d="M.5 10C1 4 5.500 .3 10 .3c5 0 8.500 3.700 8.700 7.700 0 2.500-2 4-4 4-1.500 0-2.500-.6-2.500-1.500 0-.7.700-1 .7-2.200 0-1.600-1.600-3-4-3C5 5.300 1.500 7 .5 10z" fill="#3cc7c0"/><path d="M.5 10C1 4 5.500 .3 10 .3c5 0 8.500 3.700 8.700 7.700-1-3-4-4.500-7-4.500C7 3.500 2 6 .5 10z" fill="#35b4e8"/><path d="M6.500 10.500c0 3.500 2.500 6.500 6.500 7-2 .9-4.500 1.200-6.500.5-3-1.200-5-4-5.500-6.500.500-3.500 3.500-6 6.500-6-1 1.300-1 3-1 5z" fill="#155ea8"/></svg>
<svg width="18" height="15" style="left:593.500px;top:553.500px"><path d="M0 1.500C0 .7.500 0 1.300 0h5l1.500 1.800H17c.6 0 1 .5 1 1V14c0 .5-.4 1-1 1H1c-.6 0-1-.5-1-1z" fill="#f1b52b"/><rect x="0" y="4" width="18" height="11" rx="1" fill="#fbd56c"/><rect x="4.500" y="8.500" width="9" height="6.500" fill="#3b8fe0"/><rect x="6.500" y="11.500" width="5" height="3.500" fill="#fbd56c"/></svg>
<svg width="17" height="17" style="left:630.500px;top:552.500px"><rect width="17" height="17" rx="2.500" fill="#2c7fe0"/><path d="M1 15l5.500-7 4 5 2.500-3 3.500 5z" fill="#6ec1f7"/><path d="M1 16l5.500-7 5.500 7z" fill="#a7dcff" opacity=".55"/><circle cx="12.500" cy="4.500" r="1.700" fill="#fff"/></svg>
<svg width="17" height="19" style="left:667.500px;top:551px" fill="none"><path d="M5 2.500a6.500 6.500 0 1 1-1 9" stroke="#e03a2d" stroke-width="1.800"/><path d="M8.500 1v10" stroke="#d8d8d8" stroke-width="2.200"/><path d="M8.500 10L5 16M8.500 10l3.500 6" stroke="#3c93ea" stroke-width="1.300"/><circle cx="4.300" cy="16.800" r="1.700" stroke="#3c93ea" stroke-width="1.200"/><circle cx="12.700" cy="16.800" r="1.700" stroke="#3c93ea" stroke-width="1.200"/></svg>
<div class="abs" style="left:329.6px;top:574.300px;width:29.9px;height:1.700px;background:#76b9ed"></div>
<div class="abs" style="left:440.0px;top:574.300px;width:30.6px;height:1.700px;background:#76b9ed"></div>
<div class="abs" style="left:477.0px;top:574.300px;width:29.0px;height:1.700px;background:#76b9ed"></div>
<div class="abs" style="left:510.5px;top:574.300px;width:36.5px;height:1.700px;background:#76b9ed"></div>
<div class="abs" style="left:549.8px;top:574.300px;width:29.9px;height:1.700px;background:#76b9ed"></div>
<div class="abs" style="left:586.0px;top:574.300px;width:30.5px;height:1.700px;background:#76b9ed"></div>
<div class="abs" style="left:623.0px;top:574.300px;width:30.0px;height:1.700px;background:#76b9ed"></div>
<div class="abs" style="left:659.7px;top:574.300px;width:30.3px;height:1.700px;background:#76b9ed"></div>
<svg width="20" height="17" style="left:735px;top:551.500px"><circle cx="7" cy="7" r="4.500" fill="#f6b93b"/><path d="M4 16.500a3.500 3.500 0 0 1 .3-7 4.800 4.800 0 0 1 9-.8 3.900 3.900 0 0 1 .7 7.800z" fill="#9ec9f2"/><path d="M4 16.500a3.500 3.500 0 0 1 .3-7c2 4 7 5 10.500 4.500-.3 1.500-1.500 2.500-2.800 2.500z" fill="#cfe5fa"/><circle cx="14.500" cy="4" r="3.500" fill="#e5532d"/><rect x="14.100" y="1.800" width=".9" height="2.800" fill="#fff"/><rect x="14.100" y="5.300" width=".9" height=".9" fill="#fff"/></svg>
<span class="t" style="left:760.00px;top:554.40px;line-height:13.80px;font-family:'Liberation Sans','DejaVu Sans',sans-serif;font-size:12px;font-weight:400;color:#fff;transform:scaleX(0.8392);transform-origin:left center;">21°C</span>
<svg width="100" height="14" style="left:798px;top:554.500px" fill="none" stroke="#fff" stroke-width="1.100"><path d="M3.500 9l4-4 4 4" stroke-width="1.300"/><rect x="23" y="3" width="5.500" height="8" rx="1.200"/><path d="M28.500 6l2.500-1.500v5L28.500 8z"/><path d="M24 1.200h3.500M24 12.800h3.500" stroke-width=".8"/><path d="M38 10.500a2.300 2.300 0 0 1 .5-4.500 3.500 3.500 0 0 1 6.500-.5 2.600 2.600 0 0 1 .5 5z" fill="#9a9a9a" stroke="#9a9a9a"/><path d="M37 2.500l10.500 9.500" stroke="#1f201c" stroke-width="2.200"/><path d="M37 2.500l10.500 9.500" stroke="#cfcfcf" stroke-width="1"/><rect x="57" y="5" width="10" height="5.500" /><path d="M67.500 6.500v2.500" /><rect x="58.500" y="6.300" width="6" height="3" fill="#fff" stroke="none"/><path d="M56 2.500v3M58.500 2.500v3M55.500 5.500h3.500v2h-3.500z" stroke-width=".8"/><circle cx="79" cy="7" r="5.500"/><ellipse cx="79" cy="7" rx="2.500" ry="5.500"/><path d="M73.500 7h11M74.500 4h9M74.500 10h9" stroke-width=".8"/><circle cx="83" cy="11" r="2.300" fill="#1f201c" stroke="#fff" stroke-width=".8"/><path d="M92 5.500h2l3-2.500v8l-3-2.500h-2z" /><path d="M99 4.500c1 1.500 1 3.500 0 5M101 3c1.800 2.500 1.800 5.500 0 8" stroke-width=".9"/></svg>
<span class="t" style="left:915.00px;top:555.25px;line-height:11.50px;font-family:'Liberation Sans','DejaVu Sans',sans-serif;font-size:10px;font-weight:400;color:#fff;transform:scaleX(1.0890);transform-origin:left center;">ع</span>
<span class="t" style="left:947.50px;top:548.55px;line-height:11.50px;font-family:'Liberation Sans','DejaVu Sans',sans-serif;font-size:10px;font-weight:400;color:#fff;transform:scaleX(0.8390);transform-origin:left center;">01:30</span>
<span class="t" style="left:936.70px;top:561.45px;line-height:11.50px;font-family:'Liberation Sans','DejaVu Sans',sans-serif;font-size:10px;font-weight:400;color:#fff;transform:scaleX(0.8529);transform-origin:left center;">16/06/2025</span>
<div class="abs" style="left:984px;top:546.500px;width:30px;height:29.500px;background:#2a2b27"></div>
<svg width="14" height="13" style="left:992px;top:555px" fill="none" stroke="#fff" stroke-width="1.100"><path d="M.6 .6h12.500v8.500H8.500L6.500 11.500V9.100H.6z"/></svg></body>
</html>
